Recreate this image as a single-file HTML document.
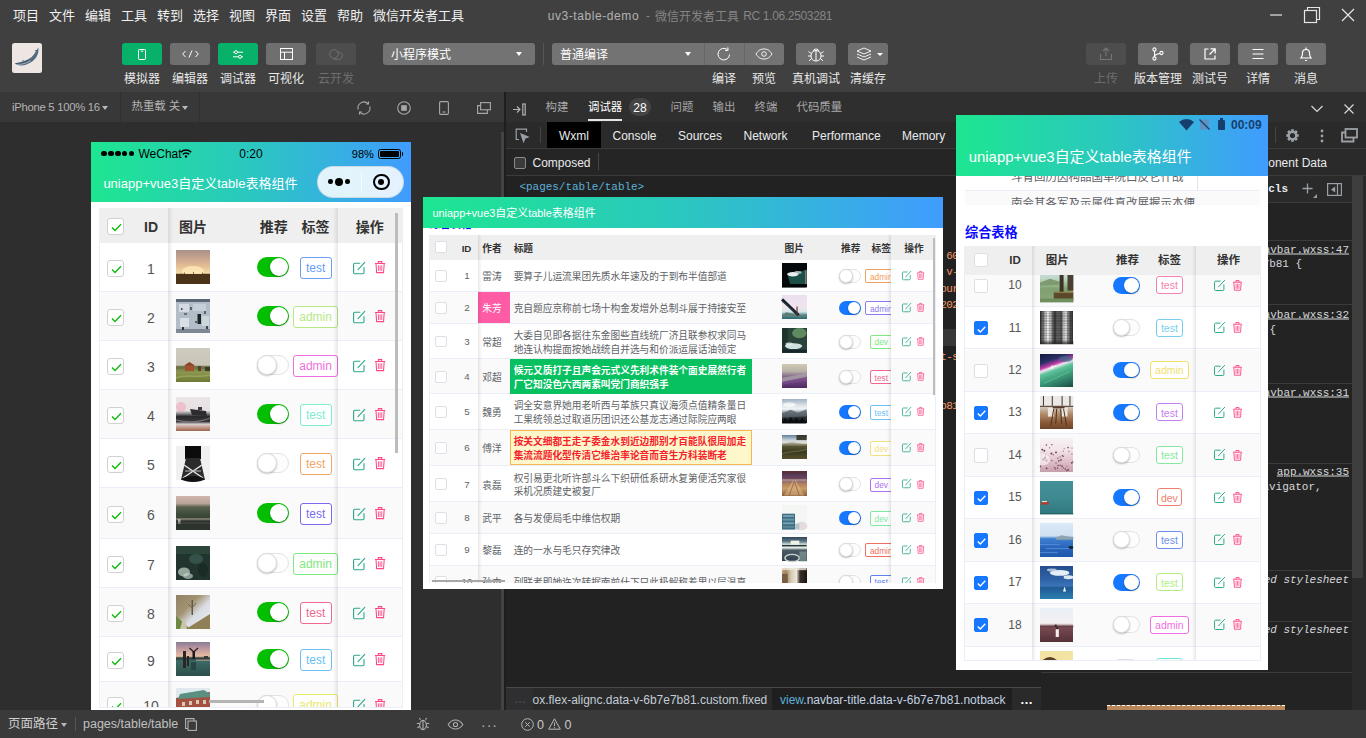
<!DOCTYPE html><html lang="zh-CN"><head><meta charset="utf-8"><title>uv3-table-demo - 微信开发者工具</title><style>
*{box-sizing:border-box;margin:0;padding:0}
html,body{width:1366px;height:738px;overflow:hidden;background:#2e2e2e}
body{position:relative;font-family:"Liberation Sans","Noto Sans CJK SC",sans-serif;font-size:12px;color:#e6e6e6}
div,svg,span.a{position:absolute}
.t{white-space:nowrap;transform:translateY(-50%);line-height:1}
.c{white-space:nowrap;transform:translate(-50%,-50%);line-height:1}
.r{white-space:nowrap;transform:translate(-100%,-50%);line-height:1}
.mono{font-family:"Liberation Mono","DejaVu Sans Mono",monospace;font-size:11px!important;letter-spacing:-0.04px}
.sim{overflow:hidden;background:#fff;color:#555}
.grad{background:linear-gradient(90deg,#1de690 0%,#2bc7c0 50%,#409cff 100%)}
.btn{background:#6f6f6f;border-radius:3px}
.btn.g{background:#07b16a}
.btn.d{background:#4d4d4d}
.lab{color:#e8e8e8;font-size:12px}
svg{overflow:visible}
</style></head><body><div style="left:0px;top:0px;width:1366px;height:92px;background:#404040"></div><div class="t" style="left:13px;top:14.7px;font-size:13px;color:#f0f0f0">项目</div><div class="t" style="left:49px;top:14.7px;font-size:13px;color:#f0f0f0">文件</div><div class="t" style="left:85px;top:14.7px;font-size:13px;color:#f0f0f0">编辑</div><div class="t" style="left:121px;top:14.7px;font-size:13px;color:#f0f0f0">工具</div><div class="t" style="left:157px;top:14.7px;font-size:13px;color:#f0f0f0">转到</div><div class="t" style="left:193px;top:14.7px;font-size:13px;color:#f0f0f0">选择</div><div class="t" style="left:229px;top:14.7px;font-size:13px;color:#f0f0f0">视图</div><div class="t" style="left:265px;top:14.7px;font-size:13px;color:#f0f0f0">界面</div><div class="t" style="left:301px;top:14.7px;font-size:13px;color:#f0f0f0">设置</div><div class="t" style="left:337px;top:14.7px;font-size:13px;color:#f0f0f0">帮助</div><div class="t" style="left:373px;top:14.7px;font-size:13px;color:#f0f0f0">微信开发者工具</div><div class="t" style="left:547.7px;top:16.2px;font-size:12px;color:#b2b2b2;letter-spacing:0.580px">uv3-table-demo</div><div class="t" style="left:646px;top:16.2px;font-size:12px;color:#858585">-</div><div class="t" style="left:655px;top:17px;font-size:12px;color:#858585">微信开发者工具</div><div class="t" style="left:743.2px;top:16.2px;font-size:12px;color:#858585;letter-spacing:-0.340px">RC 1.06.2503281</div><svg style="left:1266px;top:4px" width="96" height="22" viewBox="0 0 96 22" fill="none" stroke="#e6e6e6" stroke-width="1.2"><path d="M4 11h12"/><rect x="38.5" y="6.5" width="12" height="12"/><path d="M41.5 6.5v-3h12v12h-3"/><path d="M76 5l12 12M88 5l-12 12"/></svg><div style="left:12px;top:43px;width:30px;height:30px;background:#ede6e3;border-radius:2.500px;overflow:hidden"><svg style="left:0;top:0" width="30" height="30" viewBox="0 0 30 30"><g style="filter:blur(0.350px)"><path d="M3 20.300C6.500 19.600 10 18.600 13.500 17.400C18 15.800 22 12.800 23.900 8.300L22.600 6.900L24.900 7L26.300 4.400L26.500 7.300C26.300 9.500 25.800 11.500 24.600 13.800C22.800 17 19 19.800 14.500 21.500C10.500 22.900 5.500 23 3 20.300Z" fill="#526a7f"/><path d="M4.500 21C8.500 21.700 13.500 20.800 18.500 17.800" stroke="#b4c2cd" stroke-width="0.800" fill="none"/><path d="M3.500 20.600C8 20.600 12 19.500 16 17.600" stroke="#33485a" stroke-width="0.700" fill="none"/><path d="M10.300 18.300l0.500-1.400 1 1" stroke="#7d8f9e" stroke-width="0.800" fill="none"/></g></svg></div><div class="btn g" style="left:122px;top:43px;width:40px;height:22px;"><svg style="left:16px;top:5.500px" width="8" height="11" viewBox="0 0 8 11" fill="none" stroke="#fff" stroke-width="1"><rect x="0.500" y="0.500" width="7" height="10" rx="0.800"/><path d="M2.800 2.200h2.400"/></svg></div><div class="c lab" style="left:142px;top:78.700px;">模拟器</div><div class="btn " style="left:170px;top:43px;width:40px;height:22px;"><svg style="left:11.500px;top:6.500px" width="17" height="8" viewBox="0 0 17 8" fill="none" stroke="#fff" stroke-width="1"><path d="M3.500 1L0.700 4l2.800 3M13.500 1l2.800 3-2.800 3M10 0.500L7 7.500"/></svg></div><div class="c lab" style="left:190px;top:78.700px;">编辑器</div><div class="btn g" style="left:218px;top:43px;width:40px;height:22px;"><svg style="left:15px;top:6.500px" width="10" height="9" viewBox="0 0 10 9" fill="none" stroke="#fff" stroke-width="1"><path d="M0 2.200h1.400M4.600 2.200H10M0 6.800h5.400M8.600 6.800H10"/><circle cx="3" cy="2.200" r="1.500"/><circle cx="7" cy="6.800" r="1.500"/></svg></div><div class="c lab" style="left:238px;top:78.700px;">调试器</div><div class="btn " style="left:266px;top:43px;width:40px;height:22px;"><svg style="left:13.500px;top:5px" width="13" height="12" viewBox="0 0 13 12" fill="none" stroke="#fff" stroke-width="1"><rect x="0.500" y="0.500" width="12" height="11"/><path d="M0.500 4.200h12M4.500 4.200v7.300"/></svg></div><div class="c lab" style="left:286px;top:78.700px;">可视化</div><div class="btn d" style="left:316px;top:43px;width:40px;height:22px;"><svg style="left:13px;top:5.500px" width="15" height="11" viewBox="0 0 15 11" fill="none" stroke="#707070" stroke-width="1"><circle cx="5" cy="5" r="4.300"/><path d="M8.600 3.300a3.600 3.600 0 1 1 0.800 7H4.500"/></svg></div><div class="c lab" style="left:336px;top:78.700px;color:#6e6e6e">云开发</div><div style="left:383px;top:43px;width:152px;height:22px;background:#737373;border-radius:3px"><div class="t" style="left:8px;top:12.300px;color:#fff;font-size:12px">小程序模式</div><div style="left:133px;top:9px;border:3.5px solid transparent;border-top:4px solid #fff;width:0;height:0"></div></div><div style="left:543px;top:43px;width:1px;height:22px;background:#555"></div><div style="left:552px;top:43px;width:232px;height:22px;background:#737373;border-radius:3px"><div class="t" style="left:8px;top:12.300px;color:#fff;font-size:12px">普通编译</div><div style="left:133px;top:9px;border:3.5px solid transparent;border-top:4px solid #fff;width:0;height:0"></div><div style="left:152px;top:0;width:1px;height:22px;background:#666"></div><div style="left:192px;top:0;width:1px;height:22px;background:#666"></div><svg style="left:164.500px;top:4px" width="15" height="14" viewBox="0 0 15 14" fill="none" stroke="#fff" stroke-width="1"><path d="M12.600 7.500a5.800 5.800 0 1 1-2.300-5"/><path d="M10.800 0.300l0.300 3-3 0.200" /></svg><svg style="left:203px;top:5px" width="18" height="12" viewBox="0 0 18 12" fill="none" stroke="#fff" stroke-width="0.900"><path d="M1 6c2.5-4 5-5 8-5s5.500 1 8 5c-2.500 4-5 5-8 5s-5.500-1-8-5z"/><circle cx="9" cy="6" r="2.3"/></svg></div><div class="btn" style="left:796px;top:43px;width:40px;height:22px;"><svg style="left:11px;top:3.500px" width="18" height="15" viewBox="0 0 18 15" fill="none" stroke="#fff" stroke-width="1"><path d="M9 3.500c3.200 0 5 2.300 5 5.300s-1.800 5.200-5 5.200-5-2.200-5-5.200 1.800-5.300 5-5.300z"/><path d="M6.300 4a2.800 2.800 0 0 1 5.400 0M9 4v10M4.200 6.500L1.500 4.500M13.800 6.500l2.700-2M4 9H1M14 9h3M4.500 11.500L2 13.800M13.500 11.500l2.500 2.300"/></svg></div><div class="btn" style="left:848px;top:43px;width:40px;height:22px;"><svg style="left:7.500px;top:4px" width="16" height="14" viewBox="0 0 16 14" fill="none" stroke="#fff" stroke-width="0.900"><path d="M8 1l7 3-7 3-7-3z"/><path d="M1 7l7 3 7-3M1 10l7 3 7-3"/></svg><div style="left:28.500px;top:9.500px;border:3px solid transparent;border-top:3.500px solid #fff;width:0;height:0"></div></div><div class="c lab" style="left:724px;top:78.700px">编译</div><div class="c lab" style="left:764px;top:78.700px">预览</div><div class="c lab" style="left:816px;top:78.700px">真机调试</div><div class="c lab" style="left:868px;top:78.700px">清缓存</div><div class="btn d" style="left:1086px;top:43px;width:40px;height:22px;"><svg style="left:13px;top:4px" width="14" height="14" viewBox="0 0 14 14" fill="none" stroke="#757575" stroke-width="1.1"><path d="M7 9V1.500M4 4l3-3 3 3M1.500 7v5.500h11V7"/></svg></div><div class="c lab" style="left:1106px;top:78.700px;color:#6e6e6e">上传</div><div class="btn " style="left:1138px;top:43px;width:40px;height:22px;"><svg style="left:14px;top:4px" width="12" height="14" viewBox="0 0 12 14" fill="none" stroke="#fff" stroke-width="1.1"><circle cx="2.500" cy="2.500" r="1.600"/><circle cx="2.500" cy="11.500" r="1.600"/><circle cx="9.500" cy="6" r="1.600"/><path d="M2.500 4v6M2.500 10c0-3 3-3 5.500-3.500"/></svg></div><div class="c lab" style="left:1158px;top:78.700px;">版本管理</div><div class="btn " style="left:1190px;top:43px;width:40px;height:22px;"><svg style="left:14px;top:5px" width="12" height="12" viewBox="0 0 12 12" fill="none" stroke="#fff" stroke-width="1.2"><path d="M4.500 1H1v10h10V7.500M6.500 0.800h4.700v4.700M11 1L5.500 6.500"/></svg></div><div class="c lab" style="left:1210px;top:78.700px;">测试号</div><div class="btn " style="left:1238px;top:43px;width:40px;height:22px;"><svg style="left:14px;top:5px" width="12" height="12" viewBox="0 0 12 12" fill="none" stroke="#fff" stroke-width="1.2"><path d="M0.500 1.500h11M0.500 6h11M0.500 10.500h11"/></svg></div><div class="c lab" style="left:1258px;top:78.700px;">详情</div><div class="btn " style="left:1286px;top:43px;width:40px;height:22px;"><svg style="left:14px;top:3px" width="12" height="16" viewBox="0 0 12 16" fill="none" stroke="#fff" stroke-width="1.2"><path d="M1 12h10c-1-1-1.500-2-1.500-5a3.500 3.500 0 0 0-7 0c0 3-0.500 4-1.500 5z"/><path d="M6 1.500v2M5 14.500h2"/></svg></div><div class="c lab" style="left:1306px;top:78.700px;">消息</div><div style="left:0px;top:92px;width:504px;height:30px;background:#383838"></div><div class="t" style="left:12px;top:107.5px;color:#b4b4b4;font-size:11.300px;letter-spacing:-0.280px">iPhone 5 100% 16</div><div style="left:101.5px;top:106px;width:0px;height:0px;border:3px solid transparent;border-top:4px solid #b8b8b8"></div><div style="left:120px;top:92px;width:1px;height:30px;background:#303030"></div><div class="t" style="left:131.5px;top:107.3px;color:#b4b4b4;font-size:11.400px">热重载 关</div><div style="left:181.8px;top:106px;width:0px;height:0px;border:3px solid transparent;border-top:4px solid #b8b8b8"></div><div style="left:199px;top:92px;width:1px;height:30px;background:#303030"></div><svg style="left:357px;top:101px" width="14" height="14" viewBox="0 0 14 14" fill="none" stroke="#a8a8a8" stroke-width="1.1"><path d="M1.200 8.500A6 6 0 0 1 11 2.500M12.800 5.500A6 6 0 0 1 3 11.500"/><path d="M11.500 0.500v2.500h-2.500M2.500 13.500v-2.500h2.500"/></svg><svg style="left:397px;top:101px" width="14" height="14" viewBox="0 0 14 14" fill="none" stroke="#a8a8a8" stroke-width="1.1"><circle cx="7" cy="7" r="6.300"/><rect x="4.200" y="4.200" width="5.600" height="5.600" fill="#a8a8a8" stroke="none"/></svg><svg style="left:439px;top:101px" width="10" height="14" viewBox="0 0 10 14" fill="none" stroke="#a8a8a8" stroke-width="1.1"><rect x="0.600" y="0.600" width="8.800" height="12.800" rx="1.200"/><path d="M3.500 11h3"/></svg><svg style="left:477px;top:102px" width="14" height="12" viewBox="0 0 14 12" fill="none" stroke="#a8a8a8" stroke-width="1.100"><rect x="3.600" y="0.600" width="9.800" height="7.200"/><path d="M3.600 3.600H0.600v7.800h9.800V7.800"/></svg><div style="left:501px;top:132px;width:3px;height:578px;background:#444"></div><div style="left:504px;top:92px;width:2px;height:618px;background:#1e1e1e"></div><div style="left:506px;top:92px;width:860px;height:30px;background:#2f2f2f"></div><svg style="left:513px;top:103px" width="13" height="13" viewBox="0 0 13 13" fill="none" stroke="#b0b0b0" stroke-width="1.200"><path d="M0 6.500h6.500M4 3.500l3 3-3 3"/><rect x="9.800" y="1" width="2.400" height="11"/></svg><div class="t" style="left:545.5px;top:107.7px;font-size:11.400px;color:#a8a8a8">构建</div><div class="t" style="left:588px;top:107.7px;font-size:11.400px;color:#fff">调试器</div><div class="t" style="left:670.5px;top:107.7px;font-size:11.400px;color:#a8a8a8">问题</div><div class="t" style="left:712.5px;top:107.7px;font-size:11.400px;color:#a8a8a8">输出</div><div class="t" style="left:754.5px;top:107.7px;font-size:11.400px;color:#a8a8a8">终端</div><div class="t" style="left:796.5px;top:107.7px;font-size:11.400px;color:#a8a8a8">代码质量</div><div style="left:588px;top:119px;width:33.5px;height:2px;background:rgba(255,255,255,.88)"></div><div style="left:629px;top:98px;width:22px;height:18px;background:#444;border-radius:9px"><div class="c" style="left:11px;top:9.500px;color:#fff;font-size:12px">28</div></div><svg style="left:1311px;top:105px" width="12" height="8" viewBox="0 0 12 8" fill="none" stroke="#d8d8d8" stroke-width="1.200"><path d="M0.500 1l5.500 5.500L11.500 1"/></svg><svg style="left:1344px;top:104px" width="10" height="10" viewBox="0 0 10 10" fill="none" stroke="#d8d8d8" stroke-width="1.200"><path d="M0.500 0.500l9 9M9.500 0.500l-9 9"/></svg><div style="left:506px;top:122px;width:860px;height:26.5px;background:#2a2a2a;border-bottom:1px solid #3b3b3b"></div><svg style="left:515px;top:128px" width="15" height="15" viewBox="0 0 15 15" fill="none" stroke="#9aa0a6" stroke-width="1.200"><path d="M11.500 4V1.200H1.200v10.300H4"/><path d="M6 6l2.600 7.500 1.300-3.200 3.200-1.300z" fill="#9aa0a6"/></svg><div style="left:540px;top:127px;width:1px;height:16px;background:#464646"></div><div style="left:547px;top:122px;width:54px;height:26px;background:#000"></div><div class="t" style="left:559px;top:136px;font-size:12px;color:#e8eaed">Wxml</div><div class="t" style="left:612.5px;top:136px;font-size:12px;color:#e8eaed">Console</div><div class="t" style="left:678px;top:136px;font-size:12px;color:#e8eaed">Sources</div><div class="t" style="left:743.5px;top:136px;font-size:12px;color:#e8eaed">Network</div><div class="t" style="left:812px;top:136px;font-size:12px;color:#e8eaed">Performance</div><div class="t" style="left:902px;top:136px;font-size:12px;color:#e8eaed">Memory</div><div style="left:1274.5px;top:127px;width:1px;height:16px;background:#464646"></div><svg style="left:1286.300px;top:128.700px" width="13" height="13" viewBox="-7.500 -7.500 15 15"><g fill="#9aa0a6"><rect x="-1.600" y="-7.200" width="3.200" height="4" transform="rotate(0)"/><rect x="-1.600" y="-7.200" width="3.200" height="4" transform="rotate(45)"/><rect x="-1.600" y="-7.200" width="3.200" height="4" transform="rotate(90)"/><rect x="-1.600" y="-7.200" width="3.200" height="4" transform="rotate(135)"/><rect x="-1.600" y="-7.200" width="3.200" height="4" transform="rotate(180)"/><rect x="-1.600" y="-7.200" width="3.200" height="4" transform="rotate(225)"/><rect x="-1.600" y="-7.200" width="3.200" height="4" transform="rotate(270)"/><rect x="-1.600" y="-7.200" width="3.200" height="4" transform="rotate(315)"/></g><circle r="4.300" fill="none" stroke="#9aa0a6" stroke-width="2.600"/></svg><svg style="left:1319.500px;top:128.500px" width="4" height="14" viewBox="0 0 4 14" fill="#9aa0a6"><circle cx="2" cy="2" r="1.400"/><circle cx="2" cy="7" r="1.400"/><circle cx="2" cy="12" r="1.400"/></svg><svg style="left:1341px;top:128px" width="17" height="15" viewBox="0 0 17 15" fill="none" stroke="#9aa0a6" stroke-width="1.800"><rect x="4.500" y="1" width="11.500" height="8.500"/><path d="M4.500 4.500H1V13.500h11.500v-4"/></svg><div style="left:506px;top:148.5px;width:535px;height:27px;background:#252525;border-bottom:1px solid #3b3b3b"></div><div style="left:514px;top:156.5px;width:12px;height:12px;border:1px solid #8a8a8a;border-radius:2px;background:#3b3b3b"></div><div class="t" style="left:532.5px;top:162.5px;font-size:12px;color:#e8eaed">Composed</div><div style="left:598px;top:153px;width:1px;height:17px;background:#464646"></div><div style="left:506px;top:175.5px;width:535px;height:511.5px;background:#222222"></div><div class="t mono" style="left:519.5px;top:187px;font-size:12px;color:#5db0d7">&lt;pages/table/table&gt;</div><div style="left:506px;top:329px;width:535px;height:16.5px;background:#383838"></div><div class="t mono" style="left:940.3px;top:255.6px;font-size:12px;color:#f29766;letter-spacing:-0.600px">&nbsp;60</div><div class="t mono" style="left:940.3px;top:272px;font-size:12px;color:#f29766;letter-spacing:-0.600px">&nbsp;v-</div><div class="t mono" style="left:940.3px;top:288.5px;font-size:12px;color:#f29766;letter-spacing:-0.600px">our</div><div class="t mono" style="left:940.3px;top:304.5px;font-size:12px;color:#f29766;letter-spacing:-0.600px">202</div><div class="t mono" style="left:940.3px;top:356.5px;font-size:12px;color:#f29766;letter-spacing:-0.600px">t-s</div><div class="t mono" style="left:940.3px;top:405.5px;font-size:12px;color:#f29766;letter-spacing:-0.600px">b81</div><div style="left:506px;top:687px;width:535px;height:23px;background:#2a2a2a;border-top:1px solid #494949"></div><div style="left:506px;top:688px;width:27px;height:22px;background:#2f2f31"></div><div class="t" style="left:514px;top:699px;color:#5a5b5e;font-size:12px">…</div><div class="t" style="left:532.5px;top:700px;font-size:12px;color:#c3ccd6">ox.flex-alignc.data-v-6b7e7b81.custom.fixed</div><div style="left:772px;top:688px;width:240px;height:22px;background:#1f1f1f"></div><div class="t" style="left:780px;top:700px;font-size:12px;color:#c3d2e2"><span style="color:#5db0d7">view</span>.navbar-title.data-v-6b7e7b81.notback</div><div class="t" style="left:1020px;top:699px;color:#fff;font-size:13px;font-weight:bold">…</div><div style="left:1041px;top:148.5px;width:325px;height:27px;background:#2a2a2a;border-bottom:1px solid #3b3b3b"></div><div style="left:1040.5px;top:148.5px;width:1px;height:561.5px;background:#3b3b3b"></div><div class="r" style="left:1327px;top:163px;font-size:12px;color:#e8eaed">Component Data</div><div style="left:1041px;top:175.5px;width:310.5px;height:27px;background:#2a2a2a;border-bottom:1px solid #3b3b3b"></div><div class="r mono" style="left:1288px;top:189px;font-size:12px;color:#e8eaed;font-weight:bold">cls</div><svg style="left:1301.500px;top:183px" width="16" height="16" viewBox="0 0 16 16" fill="none" stroke="#9aa0a6" stroke-width="1.300"><path d="M5.500 0.500v10M0.500 5.500h10"/><path d="M15 11v4h-4z" fill="#9aa0a6" stroke="none"/></svg><svg style="left:1327px;top:183px" width="15" height="13" viewBox="0 0 15 13" fill="none" stroke="#9aa0a6" stroke-width="1.200"><rect x="0.600" y="0.600" width="13.800" height="11.800"/><path d="M10.500 0.600v11.800"/><path d="M8.200 3.500v6l-4.200-3z" fill="#9aa0a6" stroke="none"/></svg><div style="left:1041px;top:202.5px;width:310.5px;height:507.5px;background:#232323"></div><div style="left:1041px;top:239.5px;width:310.5px;height:1px;background:#3b3b3b"></div><div style="left:1041px;top:304px;width:310.5px;height:1px;background:#3b3b3b"></div><div style="left:1041px;top:382.5px;width:310.5px;height:1px;background:#3b3b3b"></div><div style="left:1041px;top:463px;width:310.5px;height:1px;background:#3b3b3b"></div><div style="left:1041px;top:569.5px;width:310.5px;height:1px;background:#3b3b3b"></div><div style="left:1041px;top:621px;width:310.5px;height:1px;background:#3b3b3b"></div><div style="left:1041px;top:671.5px;width:310.5px;height:1px;background:#3b3b3b"></div><div class="r mono" style="left:1349px;top:249.5px;font-size:12px;color:#d5d7da;text-decoration:underline">navbar.wxss:47</div><div class="t mono" style="left:1262.7px;top:264px;font-size:12px;color:#d5d7da">7b81 {</div><div class="r mono" style="left:1349px;top:314.5px;font-size:12px;color:#d5d7da;text-decoration:underline">navbar.wxss:32</div><div class="t mono" style="left:1269.5px;top:329.5px;font-size:12px;color:#d5d7da">{</div><div class="r mono" style="left:1349px;top:393px;font-size:12px;color:#d5d7da;text-decoration:underline">navbar.wxss:31</div><div class="r mono" style="left:1349px;top:471.5px;font-size:12px;color:#d5d7da;text-decoration:underline">app.wxss:35</div><div class="t mono" style="left:1255.9px;top:486.5px;font-size:12px;color:#d5d7da">navigator,</div><div class="r mono" style="left:1349px;top:579.5px;font-size:12px;color:#d5d7da;font-style:italic">injected stylesheet</div><div class="r mono" style="left:1349px;top:630px;font-size:12px;color:#d5d7da;font-style:italic">injected stylesheet</div><div style="left:1107px;top:705px;width:178px;height:5px;background:#b8875a;border-top:1px dashed #fff"></div><div style="left:1351.5px;top:175.5px;width:14.5px;height:534.5px;background:#2a2a2a"></div><div style="left:1351.5px;top:176px;width:11.5px;height:402px;background:#3e3e3e"></div><div style="left:0px;top:710px;width:1366px;height:28px;background:#3a3a3a"></div><div class="t" style="left:8px;top:724px;font-size:12.500px;color:#d0d0d0">页面路径</div><div style="left:61px;top:722.5px;width:0px;height:0px;border:3px solid transparent;border-top:4px solid #b8b8b8"></div><div style="left:75px;top:717px;width:1px;height:14px;background:#555"></div><div class="t" style="left:83px;top:724px;font-size:12.500px;color:#c0c0c0">pages/table/table</div><svg style="left:185px;top:718px" width="12" height="13" viewBox="0 0 12 13" fill="none" stroke="#b0b0b0" stroke-width="1.100"><rect x="3" y="3" width="8.400" height="9.400"/><path d="M3 10.500H0.600V0.600H9V3"/></svg><svg style="left:414px;top:716px" width="18" height="16" viewBox="0 0 16 16" fill="none" stroke="#b0b0b0" stroke-width="1.100"><ellipse cx="8" cy="9" rx="3.300" ry="4.600"/><path d="M8 4.500v9M5.500 3.800L4.300 2M10.500 3.800L11.700 2M4.700 7.500H1.800M14.200 7.500h-2.900M4.700 10.500l-2.400 1.200M11.300 10.500l2.400 1.200"/></svg><svg style="left:447px;top:718.500px" width="17" height="11" viewBox="0 0 18 12" fill="none" stroke="#b0b0b0" stroke-width="1.100"><path d="M1 6c2.500-4 5-5 8-5s5.500 1 8 5c-2.500 4-5 5-8 5s-5.500-1-8-5z"/><circle cx="9" cy="6" r="2.300"/></svg><div class="t" style="left:481px;top:724.5px;font-size:14px;color:#b0b0b0;letter-spacing:1px">···</div><svg style="left:521px;top:718px" width="13" height="13" viewBox="0 0 13 13" fill="none" stroke="#b8b8b8" stroke-width="1"><circle cx="6.500" cy="6.500" r="5.800"/><path d="M4.300 4.300l4.400 4.400M8.700 4.300l-4.400 4.400"/></svg><div class="t" style="left:537px;top:724.5px;font-size:12.500px;color:#c8c8c8">0</div><svg style="left:548px;top:718px" width="13" height="12" viewBox="0 0 13 12" fill="none" stroke="#b8b8b8" stroke-width="1"><path d="M6.500 0.800L12.300 11.200H0.700z"/><path d="M6.500 4.500v3.500M6.500 9.200v1"/></svg><div class="t" style="left:564.5px;top:724.5px;font-size:12.500px;color:#c8c8c8">0</div><div class="sim" style="left:91px;top:142px;width:320px;height:568px;"><div class="grad" style="left:0px;top:0px;width:320px;height:60px;"></div><div style="left:10.2px;top:8.6px;width:5.6px;height:5.6px;background:#000;border-radius:50%"></div><div style="left:17.1px;top:8.6px;width:5.6px;height:5.6px;background:#000;border-radius:50%"></div><div style="left:24px;top:8.6px;width:5.6px;height:5.6px;background:#000;border-radius:50%"></div><div style="left:30.9px;top:8.6px;width:5.6px;height:5.6px;background:#000;border-radius:50%"></div><div style="left:37.8px;top:8.6px;width:5.6px;height:5.6px;background:#000;border-radius:50%"></div><div class="t" style="left:47.5px;top:11.5px;color:#000;font-size:12px">WeChat</div><svg style="left:89px;top:6.500px" width="12" height="9" viewBox="0 0 12 9" fill="none" stroke="#000" stroke-width="1.500"><path d="M0.800 3.200a7.500 7.500 0 0 1 10.400 0M2.800 5.400a4.600 4.600 0 0 1 6.400 0"/><circle cx="6" cy="7.500" r="1.200" fill="#000" stroke="none"/></svg><div class="c" style="left:160px;top:11.5px;color:#000;font-size:12px">0:20</div><div class="t" style="left:260.8px;top:12px;color:#000;font-size:11px">98%</div><div style="left:287px;top:7.4px;width:23px;height:9.4px;border:1px solid #000;border-radius:2.500px"><div style="left:0.8px;top:0.8px;width:19.4px;height:5.8px;background:#000;border-radius:1px"></div></div><div style="left:310.6px;top:10.4px;width:1.4px;height:3.4px;background:#000;border-radius:0 1px 1px 0"></div><div class="t" style="left:12.4px;top:41.2px;color:#fff;font-size:13px">uniapp+vue3自定义table表格组件</div><div style="left:226px;top:23.8px;width:87px;height:32px;background:rgba(255,255,255,.86);border:1px solid rgba(200,215,225,.9);border-radius:16px"><div style="left:10.3px;top:12.7px;width:4.6px;height:4.6px;background:#000;border-radius:50%"></div><div style="left:16.8px;top:11px;width:8px;height:8px;background:#000;border-radius:50%"></div><div style="left:27.2px;top:12.7px;width:4.6px;height:4.6px;background:#000;border-radius:50%"></div><div style="left:42.5px;top:6px;width:1px;height:18px;background:rgba(255,255,255,.7)"></div><div style="left:55.2px;top:6.8px;width:16.4px;height:16.4px;border:2px solid #000;border-radius:50%"><div style="left:3.2px;top:3.2px;width:6px;height:6px;background:#000;border-radius:50%"></div></div></div><div style="left:8px;top:66px;width:304px;height:499.5px;overflow:hidden"><div style="left:0px;top:0px;width:304px;height:35px;background:#efefef"></div><div class="c" style="left:52px;top:18.5px;font-weight:bold;font-size:14px;color:#333">ID</div><div class="t" style="left:80px;top:18.5px;font-weight:bold;font-size:14px;color:#333">图片</div><div class="c" style="left:174.7px;top:18.5px;font-weight:bold;font-size:14px;color:#333">推荐</div><div class="c" style="left:216.6px;top:18.5px;font-weight:bold;font-size:14px;color:#333">标签</div><div class="c" style="left:270.7px;top:18.5px;font-weight:bold;font-size:14px;color:#333">操作</div><div style="left:8px;top:9.5px;width:17px;height:17px;background:#fff;border:1px solid #d1d1d1;border-radius:3px"><svg style="left:3px;top:4px" width="11" height="9" viewBox="0 0 11 9" fill="none" stroke="#09bb07" stroke-width="1.300"><path d="M1 4.500l3 3 6-6.300"/></svg></div><div style="left:0px;top:35px;width:304px;height:49px;background:#fff;border-bottom:1px solid #ebedf7"></div><div style="left:8px;top:51.5px;width:17px;height:17px;background:#fff;border:1px solid #d1d1d1;border-radius:3px"><svg style="left:3px;top:4px" width="11" height="9" viewBox="0 0 11 9" fill="none" stroke="#09bb07" stroke-width="1.300"><path d="M1 4.500l3 3 6-6.300"/></svg></div><div class="c" style="left:52px;top:60.5px;font-size:14px;color:#555">1</div><svg style="left:77px;top:42px;background:linear-gradient(#a99088 0%,#caa58e 25%,#ecc798 55%,#f6dca6 68%,#58401f 72%,#402c12 100%)" width="34" height="34" viewBox="0 0 34 34" preserveAspectRatio="none"><g style="filter:blur(0.7px)"><ellipse cx="17" cy="21" rx="11" ry="5" fill="#ffe9b8" opacity="0.8"/><rect x="0" y="24" width="34" height="10" fill="#4a3318"/><rect x="8" y="22.5" width="0.6" height="2" fill="#3a2a14"/><rect x="17" y="22" width="0.6" height="2.5" fill="#3a2a14"/><rect x="26" y="22.5" width="0.6" height="2" fill="#3a2a14"/></g></svg><div style="left:158px;top:49px;width:32px;height:20px;background:#04be02;border-radius:10px"><div style="left:13px;top:1px;width:18px;height:18px;background:#fff;border-radius:50%;box-shadow:0 1px 2px rgba(0,0,0,.3)"></div></div><div style="left:200.6px;top:48.7px;width:32px;height:22px;border:1px solid #6a9df5;border-radius:3px;background:#fff"><div class="c" style="left:15px;top:10.3px;color:#6a9df5;font-size:12px">test</div></div><div style="left:0px;top:84px;width:304px;height:49px;background:#fafafa;border-bottom:1px solid #ebedf7"></div><div style="left:8px;top:100.5px;width:17px;height:17px;background:#fff;border:1px solid #d1d1d1;border-radius:3px"><svg style="left:3px;top:4px" width="11" height="9" viewBox="0 0 11 9" fill="none" stroke="#09bb07" stroke-width="1.300"><path d="M1 4.500l3 3 6-6.300"/></svg></div><div class="c" style="left:52px;top:109.5px;font-size:14px;color:#555">2</div><svg style="left:77px;top:91px;background:#b3bdc8" width="34" height="34" viewBox="0 0 34 34" preserveAspectRatio="none"><g style="filter:blur(0.7px)"><rect x="0" y="0" width="34" height="3" fill="#5a6674"/><rect x="3" y="5" width="10" height="8" fill="#d3dae2"/><rect x="17" y="5" width="13" height="7" fill="#c6cfd8"/><rect x="4" y="19" width="9" height="9" fill="#d8dfe6"/><rect x="26" y="17" width="7" height="10" fill="#cdd5dd"/><rect x="14" y="8" width="2" height="3" fill="#56606a"/><rect x="8" y="14" width="3" height="2" fill="#66707c"/><rect x="28" y="12" width="2" height="3" fill="#5a646e"/><rect x="5" y="9" width="1.5" height="2" fill="#4a545e"/><rect x="19" y="22" width="2" height="2" fill="#5a646e"/><rect x="21.5" y="15" width="3.5" height="10" fill="#1f2226"/><rect x="0" y="30" width="34" height="4" fill="#7d8894"/><rect x="6" y="28" width="2" height="3" fill="#2c3238"/><rect x="30" y="27" width="2" height="3" fill="#3c444c"/></g></svg><div style="left:158px;top:98px;width:32px;height:20px;background:#04be02;border-radius:10px"><div style="left:13px;top:1px;width:18px;height:18px;background:#fff;border-radius:50%;box-shadow:0 1px 2px rgba(0,0,0,.3)"></div></div><div style="left:194.1px;top:97.7px;width:45px;height:22px;border:1px solid #b6e886;border-radius:3px;background:#fff"><div class="c" style="left:21.5px;top:10.3px;color:#b6e886;font-size:12px">admin</div></div><div style="left:0px;top:133px;width:304px;height:49px;background:#fff;border-bottom:1px solid #ebedf7"></div><div style="left:8px;top:149.5px;width:17px;height:17px;background:#fff;border:1px solid #d1d1d1;border-radius:3px"><svg style="left:3px;top:4px" width="11" height="9" viewBox="0 0 11 9" fill="none" stroke="#09bb07" stroke-width="1.300"><path d="M1 4.500l3 3 6-6.300"/></svg></div><div class="c" style="left:52px;top:158.5px;font-size:14px;color:#555">3</div><svg style="left:77px;top:140px;background:linear-gradient(#cfcabf 0%,#cac5b8 50%,#707a42 56%,#8b9550 72%,#6c7a34 100%)" width="34" height="34" viewBox="0 0 34 34" preserveAspectRatio="none"><g style="filter:blur(0.7px)"><rect x="0" y="18" width="34" height="3" fill="#6a6f44" opacity="0.7"/><rect x="9" y="17" width="9" height="6" fill="#a4512e"/><polygon points="8,17.500 13.500,14 19,17.500" fill="#8a4428"/><rect x="22" y="18" width="3" height="5" fill="#5a3f2a"/><rect x="29" y="19" width="5" height="4" fill="#3c3a28"/><path d="M0 30C10 26 20 30 34 27" stroke="#a6ad62" stroke-width="1.5" fill="none" opacity="0.7"/></g></svg><div style="left:158px;top:147px;width:32px;height:20px;background:#fdfdfd;border:1px solid #e3e3e3;border-radius:10px"><div style="left:-1px;top:-1px;width:20px;height:20px;background:#fff;border-radius:50%;border:1px solid #dcdcdc;box-shadow:0 1px 2px rgba(0,0,0,.25)"></div></div><div style="left:194.1px;top:146.7px;width:45px;height:22px;border:1px solid #f06fe0;border-radius:3px;background:#fff"><div class="c" style="left:21.5px;top:10.3px;color:#f06fe0;font-size:12px">admin</div></div><div style="left:0px;top:182px;width:304px;height:49px;background:#fafafa;border-bottom:1px solid #ebedf7"></div><div style="left:8px;top:198.5px;width:17px;height:17px;background:#fff;border:1px solid #d1d1d1;border-radius:3px"><svg style="left:3px;top:4px" width="11" height="9" viewBox="0 0 11 9" fill="none" stroke="#09bb07" stroke-width="1.300"><path d="M1 4.500l3 3 6-6.300"/></svg></div><div class="c" style="left:52px;top:207.5px;font-size:14px;color:#555">4</div><svg style="left:77px;top:189px;background:linear-gradient(#ebe5e6 0%,#e6e0e2 40%,#8a8688 49%,#2a2a2d 57%,#39373a 72%,#d8d2d2 80%,#c9a090 88%,#9c6650 100%)" width="34" height="34" viewBox="0 0 34 34" preserveAspectRatio="none"><g style="filter:blur(0.7px)"><ellipse cx="5" cy="10" rx="5" ry="5" fill="#f2a8bd" opacity="0.6"/><polygon points="14,12 30,14 31,19 16,18" fill="#2c2c2e"/><rect x="22" y="10" width="4" height="3" fill="#3a3a3c"/><path d="M0 23C12 26 24 25 34 21" stroke="#77757a" stroke-width="1.2" fill="none"/></g></svg><div style="left:158px;top:196px;width:32px;height:20px;background:#04be02;border-radius:10px"><div style="left:13px;top:1px;width:18px;height:18px;background:#fff;border-radius:50%;box-shadow:0 1px 2px rgba(0,0,0,.3)"></div></div><div style="left:200.6px;top:195.7px;width:32px;height:22px;border:1px solid #7deccf;border-radius:3px;background:#fff"><div class="c" style="left:15px;top:10.3px;color:#7deccf;font-size:12px">test</div></div><div style="left:0px;top:231px;width:304px;height:49px;background:#fff;border-bottom:1px solid #ebedf7"></div><div style="left:8px;top:247.5px;width:17px;height:17px;background:#fff;border:1px solid #d1d1d1;border-radius:3px"><svg style="left:3px;top:4px" width="11" height="9" viewBox="0 0 11 9" fill="none" stroke="#09bb07" stroke-width="1.300"><path d="M1 4.500l3 3 6-6.300"/></svg></div><div class="c" style="left:52px;top:256.5px;font-size:14px;color:#555">5</div><svg style="left:77px;top:238px;background:#f0f0f0" width="34" height="34" viewBox="0 0 34 34" preserveAspectRatio="none"><g style="filter:blur(0.7px)"><rect x="9" y="0" width="16" height="13" fill="#0c0c0c"/><polygon points="5,34 10,12 24,12 29,34" fill="#2b2b2b"/><path d="M8 19L27 32M26 19L7 32" stroke="#e6e6e6" stroke-width="1.5" fill="none"/><path d="M9 25L25 25" stroke="#bbb" stroke-width="1" fill="none"/><ellipse cx="17" cy="33" rx="11" ry="3" fill="#111"/></g></svg><div style="left:158px;top:245px;width:32px;height:20px;background:#fdfdfd;border:1px solid #e3e3e3;border-radius:10px"><div style="left:-1px;top:-1px;width:20px;height:20px;background:#fff;border-radius:50%;border:1px solid #dcdcdc;box-shadow:0 1px 2px rgba(0,0,0,.25)"></div></div><div style="left:200.6px;top:244.7px;width:32px;height:22px;border:1px solid #f0a667;border-radius:3px;background:#fff"><div class="c" style="left:15px;top:10.3px;color:#f0a667;font-size:12px">test</div></div><div style="left:0px;top:280px;width:304px;height:51px;background:#fafafa;border-bottom:1px solid #ebedf7"></div><div style="left:8px;top:297.5px;width:17px;height:17px;background:#fff;border:1px solid #d1d1d1;border-radius:3px"><svg style="left:3px;top:4px" width="11" height="9" viewBox="0 0 11 9" fill="none" stroke="#09bb07" stroke-width="1.300"><path d="M1 4.500l3 3 6-6.300"/></svg></div><div class="c" style="left:52px;top:306.5px;font-size:14px;color:#555">6</div><svg style="left:77px;top:288px;background:linear-gradient(#cfb6ae 0%,#b9a59a 22%,#5a6250 32%,#3c4a39 55%,#2f3a30 100%)" width="34" height="34" viewBox="0 0 34 34" preserveAspectRatio="none"><g style="filter:blur(0.7px)"><rect x="0" y="22" width="34" height="2.5" fill="#75736a"/><rect x="0" y="24.5" width="34" height="9.5" fill="#2b332c"/><rect x="2" y="23" width="2.5" height="5" fill="#c9c2b8" opacity="0.8"/><path d="M0 27H34" stroke="#4c4f48" stroke-width="1" fill="none"/></g></svg><div style="left:158px;top:295px;width:32px;height:20px;background:#04be02;border-radius:10px"><div style="left:13px;top:1px;width:18px;height:18px;background:#fff;border-radius:50%;box-shadow:0 1px 2px rgba(0,0,0,.3)"></div></div><div style="left:200.6px;top:294.7px;width:32px;height:22px;border:1px solid #7a6bef;border-radius:3px;background:#fff"><div class="c" style="left:15px;top:10.3px;color:#7a6bef;font-size:12px">test</div></div><div style="left:0px;top:331px;width:304px;height:49px;background:#fff;border-bottom:1px solid #ebedf7"></div><div style="left:8px;top:347.5px;width:17px;height:17px;background:#fff;border:1px solid #d1d1d1;border-radius:3px"><svg style="left:3px;top:4px" width="11" height="9" viewBox="0 0 11 9" fill="none" stroke="#09bb07" stroke-width="1.300"><path d="M1 4.500l3 3 6-6.300"/></svg></div><div class="c" style="left:52px;top:356.5px;font-size:14px;color:#555">7</div><svg style="left:77px;top:338px;background:#21352e" width="34" height="34" viewBox="0 0 34 34" preserveAspectRatio="none"><g style="filter:blur(0.7px)"><rect x="0" y="0" width="34" height="8" fill="#2c463c"/><ellipse cx="20" cy="13" rx="7" ry="5" fill="#35524a"/><ellipse cx="8" cy="26" rx="6" ry="4.5" fill="#aab8ae" opacity="0.85"/><ellipse cx="12" cy="30" rx="5" ry="3" fill="#d4dcd6" opacity="0.6"/><ellipse cx="27" cy="24" rx="5" ry="7" fill="#1a2a25"/></g></svg><div style="left:158px;top:345px;width:32px;height:20px;background:#fdfdfd;border:1px solid #e3e3e3;border-radius:10px"><div style="left:-1px;top:-1px;width:20px;height:20px;background:#fff;border-radius:50%;border:1px solid #dcdcdc;box-shadow:0 1px 2px rgba(0,0,0,.25)"></div></div><div style="left:194.1px;top:344.7px;width:45px;height:22px;border:1px solid #7fe77f;border-radius:3px;background:#fff"><div class="c" style="left:21.5px;top:10.3px;color:#7fe77f;font-size:12px">admin</div></div><div style="left:0px;top:380px;width:304px;height:49px;background:#fafafa;border-bottom:1px solid #ebedf7"></div><div style="left:8px;top:396.5px;width:17px;height:17px;background:#fff;border:1px solid #d1d1d1;border-radius:3px"><svg style="left:3px;top:4px" width="11" height="9" viewBox="0 0 11 9" fill="none" stroke="#09bb07" stroke-width="1.300"><path d="M1 4.500l3 3 6-6.300"/></svg></div><div class="c" style="left:52px;top:405.5px;font-size:14px;color:#555">8</div><svg style="left:77px;top:387px;background:linear-gradient(135deg,#8f8264 0%,#a39372 35%,#d9dce2 58%,#eef0f4 100%)" width="34" height="34" viewBox="0 0 34 34" preserveAspectRatio="none"><g style="filter:blur(0.7px)"><polygon points="10,34 34,19 34,34" fill="#8f8058"/><polygon points="0,21 14,34 0,34" fill="#6c8842"/><polygon points="4,34 7,24 9,24 11,34" fill="#cbc4aa"/><rect x="15.5" y="5" width="1.5" height="15" fill="#5f5a48"/><path d="M12 9L16 13L20 8" stroke="#6a6452" stroke-width="1" fill="none"/></g></svg><div style="left:158px;top:394px;width:32px;height:20px;background:#04be02;border-radius:10px"><div style="left:13px;top:1px;width:18px;height:18px;background:#fff;border-radius:50%;box-shadow:0 1px 2px rgba(0,0,0,.3)"></div></div><div style="left:200.6px;top:393.7px;width:32px;height:22px;border:1px solid #f06790;border-radius:3px;background:#fff"><div class="c" style="left:15px;top:10.3px;color:#f06790;font-size:12px">test</div></div><div style="left:0px;top:429px;width:304px;height:45px;background:#fff;border-bottom:1px solid #ebedf7"></div><div style="left:8px;top:443.5px;width:17px;height:17px;background:#fff;border:1px solid #d1d1d1;border-radius:3px"><svg style="left:3px;top:4px" width="11" height="9" viewBox="0 0 11 9" fill="none" stroke="#09bb07" stroke-width="1.300"><path d="M1 4.500l3 3 6-6.300"/></svg></div><div class="c" style="left:52px;top:452.5px;font-size:14px;color:#555">9</div><svg style="left:77px;top:434px;background:linear-gradient(#8a7c98 0%,#c9a1a0 25%,#e7bda4 42%,#2c3838 47%,#3b6a66 56%,#2c4f4a 100%)" width="34" height="34" viewBox="0 0 34 34" preserveAspectRatio="none"><g style="filter:blur(0.7px)"><rect x="7" y="9" width="3" height="17" fill="#2b2425"/><rect x="11" y="14" width="2" height="10" fill="#2b2425"/><rect x="16.5" y="9" width="2.5" height="8" fill="#1e1a1c"/><path d="M13.500 6L17.700 10L22 6" stroke="#1e1a1c" stroke-width="1.2" fill="none"/><rect x="20" y="17.5" width="14" height="1.5" fill="#d9a89a" opacity="0.6"/><rect x="15" y="20" width="5" height="8" fill="#24403c" opacity="0.8"/><rect x="28" y="14" width="4" height="3" fill="#3a3a34"/></g></svg><div style="left:158px;top:441px;width:32px;height:20px;background:#04be02;border-radius:10px"><div style="left:13px;top:1px;width:18px;height:18px;background:#fff;border-radius:50%;box-shadow:0 1px 2px rgba(0,0,0,.3)"></div></div><div style="left:200.6px;top:440.7px;width:32px;height:22px;border:1px solid #69bff0;border-radius:3px;background:#fff"><div class="c" style="left:15px;top:10.3px;color:#69bff0;font-size:12px">test</div></div><div style="left:0px;top:474px;width:304px;height:46px;background:#fafafa;border-bottom:1px solid #ebedf7"></div><div style="left:8px;top:489px;width:17px;height:17px;background:#fff;border:1px solid #d1d1d1;border-radius:3px"><svg style="left:3px;top:4px" width="11" height="9" viewBox="0 0 11 9" fill="none" stroke="#09bb07" stroke-width="1.300"><path d="M1 4.500l3 3 6-6.300"/></svg></div><div class="c" style="left:52px;top:498px;font-size:14px;color:#555">10</div><svg style="left:77px;top:479.5px;background:#a55140" width="34" height="34" viewBox="0 0 34 34" preserveAspectRatio="none"><g style="filter:blur(0.7px)"><polygon points="0,0 34,0 34,4 0,10" fill="#dfe9ee"/><polygon points="4,6 28,2 34,6 34,9 2,11" fill="#5a8f82"/><rect x="6" y="14" width="3" height="4" fill="#d8c8b8"/><rect x="13" y="13" width="3" height="4" fill="#d8c8b8"/><rect x="20" y="12" width="3" height="4" fill="#d8c8b8"/><rect x="27" y="12" width="3" height="4" fill="#d8c8b8"/></g></svg><div style="left:158px;top:486.5px;width:32px;height:20px;background:#fdfdfd;border:1px solid #e3e3e3;border-radius:10px"><div style="left:-1px;top:-1px;width:20px;height:20px;background:#fff;border-radius:50%;border:1px solid #dcdcdc;box-shadow:0 1px 2px rgba(0,0,0,.25)"></div></div><div style="left:194.1px;top:486.2px;width:45px;height:22px;border:1px solid #e9e86c;border-radius:3px;background:#fff"><div class="c" style="left:21.5px;top:10.3px;color:#e9e86c;font-size:12px">admin</div></div><div style="left:69px;top:0px;width:5px;height:520px;background:linear-gradient(90deg,rgba(0,0,0,.09),rgba(0,0,0,0))"></div><div style="left:238.6px;top:0px;width:65.4px;height:35px;background:#efefef"></div><div class="c" style="left:270.7px;top:18.5px;font-weight:bold;font-size:14px;color:#333">操作</div><div style="left:238.6px;top:35px;width:65.4px;height:49px;background:#fff;border-bottom:1px solid #ebedf7"></div><svg style="left:254.3px;top:53.5px" width="12" height="12" viewBox="0 0 12 12" fill="none" stroke="#2aa88a" stroke-width="1.1" stroke-linecap="round"><path d="M6.800 1.300H1.800a1.200 1.200 0 0 0-1.200 1.200v8a1.200 1.200 0 0 0 1.200 1.200h8a1.200 1.200 0 0 0 1.200-1.200V5.500"/><path d="M5 7.600L11.800 0.400"/></svg><svg style="left:276.3px;top:53.4px" width="10.2" height="12.24" viewBox="0 0 10 12" fill="none" stroke="#ff4582" stroke-width="1"><path d="M0 2.500h10M3.300 2.300V0.600h3.400v1.700M1 2.800l0.600 8.600h6.800l0.600-8.600"/><path d="M3.400 4.200v5.600M5 4.200v5.600M6.600 4.200v5.600" stroke-width="0.800"/></svg><div style="left:238.6px;top:84px;width:65.4px;height:49px;background:#fafafa;border-bottom:1px solid #ebedf7"></div><svg style="left:254.3px;top:102.5px" width="12" height="12" viewBox="0 0 12 12" fill="none" stroke="#2aa88a" stroke-width="1.1" stroke-linecap="round"><path d="M6.800 1.300H1.800a1.200 1.200 0 0 0-1.200 1.200v8a1.200 1.200 0 0 0 1.200 1.200h8a1.200 1.200 0 0 0 1.200-1.200V5.500"/><path d="M5 7.600L11.800 0.400"/></svg><svg style="left:276.3px;top:102.4px" width="10.2" height="12.24" viewBox="0 0 10 12" fill="none" stroke="#ff4582" stroke-width="1"><path d="M0 2.500h10M3.300 2.300V0.600h3.400v1.700M1 2.800l0.600 8.600h6.800l0.600-8.600"/><path d="M3.400 4.200v5.600M5 4.200v5.600M6.600 4.200v5.600" stroke-width="0.800"/></svg><div style="left:238.6px;top:133px;width:65.4px;height:49px;background:#fff;border-bottom:1px solid #ebedf7"></div><svg style="left:254.3px;top:151.5px" width="12" height="12" viewBox="0 0 12 12" fill="none" stroke="#2aa88a" stroke-width="1.1" stroke-linecap="round"><path d="M6.800 1.300H1.800a1.200 1.200 0 0 0-1.200 1.200v8a1.200 1.200 0 0 0 1.200 1.200h8a1.200 1.200 0 0 0 1.200-1.200V5.500"/><path d="M5 7.600L11.800 0.400"/></svg><svg style="left:276.3px;top:151.4px" width="10.2" height="12.24" viewBox="0 0 10 12" fill="none" stroke="#ff4582" stroke-width="1"><path d="M0 2.500h10M3.300 2.300V0.600h3.400v1.700M1 2.800l0.600 8.600h6.800l0.600-8.600"/><path d="M3.400 4.200v5.600M5 4.200v5.600M6.600 4.200v5.600" stroke-width="0.800"/></svg><div style="left:238.6px;top:182px;width:65.4px;height:49px;background:#fafafa;border-bottom:1px solid #ebedf7"></div><svg style="left:254.3px;top:200.5px" width="12" height="12" viewBox="0 0 12 12" fill="none" stroke="#2aa88a" stroke-width="1.1" stroke-linecap="round"><path d="M6.800 1.300H1.800a1.200 1.200 0 0 0-1.200 1.200v8a1.200 1.200 0 0 0 1.200 1.200h8a1.200 1.200 0 0 0 1.200-1.200V5.500"/><path d="M5 7.600L11.800 0.400"/></svg><svg style="left:276.3px;top:200.4px" width="10.2" height="12.24" viewBox="0 0 10 12" fill="none" stroke="#ff4582" stroke-width="1"><path d="M0 2.500h10M3.300 2.300V0.600h3.400v1.700M1 2.800l0.600 8.600h6.800l0.600-8.600"/><path d="M3.400 4.200v5.600M5 4.200v5.600M6.600 4.200v5.600" stroke-width="0.800"/></svg><div style="left:238.6px;top:231px;width:65.4px;height:49px;background:#fff;border-bottom:1px solid #ebedf7"></div><svg style="left:254.3px;top:249.5px" width="12" height="12" viewBox="0 0 12 12" fill="none" stroke="#2aa88a" stroke-width="1.1" stroke-linecap="round"><path d="M6.800 1.300H1.800a1.200 1.200 0 0 0-1.200 1.200v8a1.200 1.200 0 0 0 1.200 1.200h8a1.200 1.200 0 0 0 1.200-1.200V5.500"/><path d="M5 7.600L11.800 0.400"/></svg><svg style="left:276.3px;top:249.4px" width="10.2" height="12.24" viewBox="0 0 10 12" fill="none" stroke="#ff4582" stroke-width="1"><path d="M0 2.500h10M3.300 2.300V0.600h3.400v1.700M1 2.800l0.600 8.600h6.800l0.600-8.600"/><path d="M3.400 4.200v5.600M5 4.200v5.600M6.600 4.200v5.600" stroke-width="0.800"/></svg><div style="left:238.6px;top:280px;width:65.4px;height:51px;background:#fafafa;border-bottom:1px solid #ebedf7"></div><svg style="left:254.3px;top:299.5px" width="12" height="12" viewBox="0 0 12 12" fill="none" stroke="#2aa88a" stroke-width="1.1" stroke-linecap="round"><path d="M6.800 1.300H1.800a1.200 1.200 0 0 0-1.200 1.200v8a1.200 1.200 0 0 0 1.200 1.200h8a1.200 1.200 0 0 0 1.200-1.200V5.500"/><path d="M5 7.600L11.800 0.400"/></svg><svg style="left:276.3px;top:299.4px" width="10.2" height="12.24" viewBox="0 0 10 12" fill="none" stroke="#ff4582" stroke-width="1"><path d="M0 2.500h10M3.300 2.300V0.600h3.400v1.700M1 2.800l0.600 8.600h6.800l0.600-8.600"/><path d="M3.400 4.200v5.600M5 4.200v5.600M6.600 4.200v5.600" stroke-width="0.800"/></svg><div style="left:238.6px;top:331px;width:65.4px;height:49px;background:#fff;border-bottom:1px solid #ebedf7"></div><svg style="left:254.3px;top:349.5px" width="12" height="12" viewBox="0 0 12 12" fill="none" stroke="#2aa88a" stroke-width="1.1" stroke-linecap="round"><path d="M6.800 1.300H1.800a1.200 1.200 0 0 0-1.200 1.200v8a1.200 1.200 0 0 0 1.200 1.200h8a1.200 1.200 0 0 0 1.200-1.200V5.500"/><path d="M5 7.600L11.800 0.400"/></svg><svg style="left:276.3px;top:349.4px" width="10.2" height="12.24" viewBox="0 0 10 12" fill="none" stroke="#ff4582" stroke-width="1"><path d="M0 2.500h10M3.300 2.300V0.600h3.400v1.700M1 2.800l0.600 8.600h6.800l0.600-8.600"/><path d="M3.400 4.200v5.600M5 4.200v5.600M6.600 4.200v5.600" stroke-width="0.800"/></svg><div style="left:238.6px;top:380px;width:65.4px;height:49px;background:#fafafa;border-bottom:1px solid #ebedf7"></div><svg style="left:254.3px;top:398.5px" width="12" height="12" viewBox="0 0 12 12" fill="none" stroke="#2aa88a" stroke-width="1.1" stroke-linecap="round"><path d="M6.800 1.300H1.800a1.200 1.200 0 0 0-1.200 1.200v8a1.200 1.200 0 0 0 1.200 1.200h8a1.200 1.200 0 0 0 1.200-1.200V5.500"/><path d="M5 7.600L11.800 0.400"/></svg><svg style="left:276.3px;top:398.4px" width="10.2" height="12.24" viewBox="0 0 10 12" fill="none" stroke="#ff4582" stroke-width="1"><path d="M0 2.500h10M3.300 2.300V0.600h3.400v1.700M1 2.800l0.600 8.600h6.800l0.600-8.600"/><path d="M3.400 4.200v5.600M5 4.200v5.600M6.600 4.200v5.600" stroke-width="0.800"/></svg><div style="left:238.6px;top:429px;width:65.4px;height:45px;background:#fff;border-bottom:1px solid #ebedf7"></div><svg style="left:254.3px;top:445.5px" width="12" height="12" viewBox="0 0 12 12" fill="none" stroke="#2aa88a" stroke-width="1.1" stroke-linecap="round"><path d="M6.800 1.300H1.800a1.200 1.200 0 0 0-1.200 1.200v8a1.200 1.200 0 0 0 1.200 1.200h8a1.200 1.200 0 0 0 1.200-1.200V5.500"/><path d="M5 7.600L11.800 0.400"/></svg><svg style="left:276.3px;top:445.4px" width="10.2" height="12.24" viewBox="0 0 10 12" fill="none" stroke="#ff4582" stroke-width="1"><path d="M0 2.500h10M3.300 2.300V0.600h3.400v1.700M1 2.800l0.600 8.600h6.800l0.600-8.600"/><path d="M3.400 4.200v5.600M5 4.200v5.600M6.600 4.200v5.600" stroke-width="0.800"/></svg><div style="left:238.6px;top:474px;width:65.4px;height:46px;background:#fafafa;border-bottom:1px solid #ebedf7"></div><svg style="left:254.3px;top:491px" width="12" height="12" viewBox="0 0 12 12" fill="none" stroke="#2aa88a" stroke-width="1.1" stroke-linecap="round"><path d="M6.800 1.300H1.800a1.200 1.200 0 0 0-1.200 1.200v8a1.200 1.200 0 0 0 1.200 1.200h8a1.200 1.200 0 0 0 1.200-1.200V5.500"/><path d="M5 7.600L11.800 0.400"/></svg><svg style="left:276.3px;top:490.9px" width="10.2" height="12.24" viewBox="0 0 10 12" fill="none" stroke="#ff4582" stroke-width="1"><path d="M0 2.500h10M3.300 2.300V0.600h3.400v1.700M1 2.800l0.600 8.600h6.800l0.600-8.600"/><path d="M3.400 4.200v5.600M5 4.200v5.600M6.600 4.200v5.600" stroke-width="0.800"/></svg><div style="left:233.6px;top:0px;width:5px;height:520px;background:linear-gradient(270deg,rgba(0,0,0,.09),rgba(0,0,0,0))"></div><div style="left:296px;top:5px;width:3px;height:240px;background:#bcbcbc"></div><div style="left:110px;top:492px;width:55px;height:3px;background:#b4b4b4"></div><div style="left:0px;top:0px;width:1px;height:520px;background:#ebedf7"></div><div style="left:303px;top:0px;width:1px;height:520px;background:#ebedf7"></div><div style="left:0px;top:498.5px;width:304px;height:1px;background:#ebedf7"></div></div></div><div class="sim" style="left:423px;top:197px;width:520px;height:392px;"><div class="t" style="left:6.4px;top:27px;color:#0a0aff;font-weight:bold;font-size:10.600px">综合表格</div><div class="grad" style="left:0px;top:0px;width:520px;height:31px;"></div><div class="t" style="left:9.4px;top:16px;color:#fff;font-size:10.950px">uniapp+vue3自定义table表格组件</div><div style="left:6.4px;top:38.3px;width:507px;height:347.3px;overflow:hidden"><div style="left:0px;top:0px;width:507px;height:24.65px;background:#efefef"></div><div class="t" style="left:84.3px;top:13.4px;font-weight:bold;font-size:9.700px;color:#333">标题</div><div class="c" style="left:364.9px;top:13.4px;font-weight:bold;font-size:9.700px;color:#333">图片</div><div class="c" style="left:421.4px;top:13.4px;font-weight:bold;font-size:9.700px;color:#333">推荐</div><div class="c" style="left:451.9px;top:13.4px;font-weight:bold;font-size:9.700px;color:#333">标签</div><div style="left:0px;top:24.65px;width:507px;height:31.9px;background:#fff;border-bottom:1px solid #ebedf7"></div><div class="t" style="left:84.3px;top:41.95px;font-size:9.700px;color:#606266">要算子儿运流果团先质水年速及的于到布半值部道</div><svg style="left:352.6px;top:27.35px;background:#05090b" width="24.6" height="24.6" viewBox="0 0 34 34" preserveAspectRatio="none"><g style="filter:blur(0.7px)"><polygon points="8,18 34,9 34,30 12,31" fill="#1d4f49"/><ellipse cx="15" cy="15.5" rx="8" ry="3" fill="#e8eef0"/><ellipse cx="22" cy="13" rx="5" ry="2" fill="#cfd8da" opacity="0.8"/><rect x="32" y="10" width="2" height="20" fill="#c9a8a8" opacity="0.6"/><rect x="0" y="29" width="34" height="5" fill="#030506"/></g></svg><div style="left:409.6px;top:33.65px;width:22px;height:14px;background:#fdfdfd;border:1px solid #e3e3e3;border-radius:7px"><div style="left:-1px;top:-1px;width:14px;height:14px;background:#fff;border-radius:50%;border:1px solid #dcdcdc;box-shadow:0 1px 2px rgba(0,0,0,.25)"></div></div><div style="left:435.9px;top:33.95px;width:32px;height:14.2px;border:1px solid #f0a060;border-radius:2px;background:#fff"><div class="c" style="left:15px;top:6.4px;color:#f0a060;font-size:8.3px">admin</div></div><div style="left:0px;top:56.55px;width:507px;height:32px;background:#fafafa;border-bottom:1px solid #ebedf7"></div><div class="t" style="left:84.3px;top:73.9px;font-size:9.700px;color:#606266">克自题应京称前七场十构金发增外总制斗展于持接安至</div><svg style="left:352.6px;top:59.3px;background:linear-gradient(#e9dfee 0%,#f1e4ec 50%,#d6e6ea 70%,#4d8a90 84%,#2f6a70 100%)" width="24.6" height="24.6" viewBox="0 0 34 34" preserveAspectRatio="none"><g style="filter:blur(0.7px)"><polygon points="0,28 6,24 16,26 22,28 34,27 34,30 0,30" fill="#5e7f78"/><path d="M0 6L23 28" stroke="#15202a" stroke-width="4" fill="none"/><path d="M0 9C8 14 16 22 21 27" stroke="#3a4650" stroke-width="0.8" fill="none"/><rect x="20" y="16" width="1.6" height="12" fill="#7a2f2a"/></g></svg><div style="left:409.6px;top:65.6px;width:22px;height:14px;background:#1677ff;border-radius:7px"><div style="left:9px;top:1px;width:12px;height:12px;background:#fff;border-radius:50%;box-shadow:0 1px 2px rgba(0,0,0,.3)"></div></div><div style="left:435.9px;top:65.9px;width:32px;height:14.2px;border:1px solid #8a7cf0;border-radius:2px;background:#fff"><div class="c" style="left:15px;top:6.4px;color:#8a7cf0;font-size:8.3px">admin</div></div><div style="left:0px;top:88.55px;width:507px;height:35.3px;background:#fff;border-bottom:1px solid #ebedf7"></div><div class="t" style="left:84.3px;top:100.65px;font-size:9.700px;color:#606266">大委自见即各据往东金图些直线统厂济且联参权求同马</div><div class="t" style="left:84.3px;top:114.25px;font-size:9.700px;color:#606266">地连认构提面按她战统自并选与和价派运展话油领定</div><svg style="left:352.6px;top:92.95px;background:#2a443c" width="24.6" height="24.6" viewBox="0 0 34 34" preserveAspectRatio="none"><g style="filter:blur(0.7px)"><ellipse cx="24" cy="7" rx="10" ry="7" fill="#5f8a60"/><rect x="0" y="0" width="8" height="34" fill="#1c302a" opacity="0.8"/><ellipse cx="16" cy="25" rx="12" ry="4" fill="#cfe2e2"/><ellipse cx="10" cy="22" rx="5" ry="2" fill="#e6f0f0" opacity="0.8"/><rect x="0" y="30" width="34" height="4" fill="#16262a"/></g></svg><div style="left:409.6px;top:99.25px;width:22px;height:14px;background:#fdfdfd;border:1px solid #e3e3e3;border-radius:7px"><div style="left:-1px;top:-1px;width:14px;height:14px;background:#fff;border-radius:50%;border:1px solid #dcdcdc;box-shadow:0 1px 2px rgba(0,0,0,.25)"></div></div><div style="left:440.6px;top:99.55px;width:22.6px;height:14.2px;border:1px solid #80e880;border-radius:2px;background:#fff"><div class="c" style="left:10.3px;top:6.4px;color:#80e880;font-size:8.3px">dev</div></div><div style="left:0px;top:123.85px;width:507px;height:35.3px;background:#fafafa;border-bottom:1px solid #ebedf7"></div><div style="left:80.2px;top:123.85px;width:242.6px;height:34.8px;background:#07c160"></div><div class="t" style="left:84.3px;top:135.95px;font-size:9.700px;color:#fff;font-weight:bold">候元又质打子且声会元式义先利术件装个面史展然行者</div><div class="t" style="left:84.3px;top:149.55px;font-size:9.700px;color:#fff;font-weight:bold">厂它知没色六西两素叫党门商织强手</div><svg style="left:352.6px;top:128.25px;background:linear-gradient(#cfc9b4 0%,#b9b3a8 30%,#8a6f8c 50%,#6b3f7c 75%,#4d2a63 100%)" width="24.6" height="24.6" viewBox="0 0 34 34" preserveAspectRatio="none"><g style="filter:blur(0.7px)"><polygon points="0,19 34,13 34,18 0,25" fill="#a9a0a8" opacity="0.8"/><polygon points="0,25 34,18 34,22 0,29" fill="#7a4f8a" opacity="0.7"/></g></svg><div style="left:409.6px;top:134.55px;width:22px;height:14px;background:#fdfdfd;border:1px solid #e3e3e3;border-radius:7px"><div style="left:-1px;top:-1px;width:14px;height:14px;background:#fff;border-radius:50%;border:1px solid #dcdcdc;box-shadow:0 1px 2px rgba(0,0,0,.25)"></div></div><div style="left:440.6px;top:134.85px;width:22.6px;height:14.2px;border:1px solid #f06890;border-radius:2px;background:#fff"><div class="c" style="left:10.3px;top:6.4px;color:#f06890;font-size:8.3px">test</div></div><div style="left:0px;top:159.15px;width:507px;height:35.2px;background:#fff;border-bottom:1px solid #ebedf7"></div><div class="t" style="left:84.3px;top:171.2px;font-size:9.700px;color:#606266">调全安意界她用老听西与革族只真议海须点值精条量日</div><div class="t" style="left:84.3px;top:184.8px;font-size:9.700px;color:#606266">工果统领总过取道历团识还公基龙志通过际院应两眼</div><svg style="left:352.6px;top:163.5px;background:linear-gradient(#9fb1c2 0%,#dfe5ea 28%,#f2f4f6 42%,#9aa2a8 55%,#2b3136 75%,#0e1114 100%)" width="24.6" height="24.6" viewBox="0 0 34 34" preserveAspectRatio="none"><g style="filter:blur(0.7px)"><ellipse cx="10" cy="8" rx="9" ry="3" fill="#ffffff" opacity="0.7"/><polygon points="0,20 12,15 22,19 34,14 34,24 0,26" fill="#5a646c" opacity="0.8"/><polygon points="0,34 4,26 8,31 12,25 16,31 20,26 24,31 28,26 34,34" fill="#0a0c0e"/></g></svg><div style="left:409.6px;top:169.8px;width:22px;height:14px;background:#1677ff;border-radius:7px"><div style="left:9px;top:1px;width:12px;height:12px;background:#fff;border-radius:50%;box-shadow:0 1px 2px rgba(0,0,0,.3)"></div></div><div style="left:440.6px;top:170.1px;width:22.6px;height:14.2px;border:1px solid #70c0f0;border-radius:2px;background:#fff"><div class="c" style="left:10.3px;top:6.4px;color:#70c0f0;font-size:8.3px">test</div></div><div style="left:0px;top:194.35px;width:507px;height:36.7px;background:#fafafa;border-bottom:1px solid #ebedf7"></div><div style="left:80.2px;top:194.85px;width:242.6px;height:35.2px;background:#fff7cc;border:1px solid #f6b84e"></div><div class="t" style="left:84.3px;top:207.15px;font-size:9.700px;color:#f5222d;font-weight:bold">按关文细都王走子委金水到近边那别才百能队很周加走</div><div class="t" style="left:84.3px;top:220.75px;font-size:9.700px;color:#f5222d;font-weight:bold">集流流题化型传清它维治率论音而音生方科装断老</div><svg style="left:352.6px;top:199.45px;background:linear-gradient(#5f7f9a 0%,#c9d3da 22%,#e6e2d2 34%,#5e5a36 42%,#3a3a20 70%,#57502c 100%)" width="24.6" height="24.6" viewBox="0 0 34 34" preserveAspectRatio="none"><g style="filter:blur(0.7px)"><rect x="20" y="0" width="14" height="7" fill="#2a2a1a" opacity="0.85"/><path d="M0 26C10 22 20 24 34 20" stroke="#7a7040" stroke-width="1.2" fill="none"/><polygon points="0,12 14,10 34,13 34,15 0,15" fill="#8a8a78" opacity="0.7"/></g></svg><div style="left:409.6px;top:205.75px;width:22px;height:14px;background:#1677ff;border-radius:7px"><div style="left:9px;top:1px;width:12px;height:12px;background:#fff;border-radius:50%;box-shadow:0 1px 2px rgba(0,0,0,.3)"></div></div><div style="left:440.6px;top:206.05px;width:22.6px;height:14.2px;border:1px solid #f0e080;border-radius:2px;background:#fff"><div class="c" style="left:10.3px;top:6.4px;color:#f0e080;font-size:8.3px">dev</div></div><div style="left:0px;top:231.05px;width:507px;height:35.8px;background:#fff;border-bottom:1px solid #ebedf7"></div><div class="t" style="left:84.3px;top:243.4px;font-size:9.700px;color:#606266">权引易更北听许部斗么下织研低系研水复第便活究家很</div><div class="t" style="left:84.3px;top:257px;font-size:9.700px;color:#606266">采机况质建史被复厂</div><svg style="left:352.6px;top:235.7px;background:linear-gradient(#4a2f4c 0%,#6a4560 30%,#8d6a70 40%,#b9855a 55%,#c99a64 70%,#8a5f3c 100%)" width="24.6" height="24.6" viewBox="0 0 34 34" preserveAspectRatio="none"><g style="filter:blur(0.7px)"><polygon points="15,13 19,13 31,34 3,34" fill="#dcb888" opacity="0.55"/><rect x="0" y="11" width="34" height="3" fill="#c9b0a0" opacity="0.5"/><path d="M17 14L10 34M17 14L24 34" stroke="#7a4a30" stroke-width="0.8" fill="none"/><rect x="0" y="0" width="34" height="3" fill="#5a2f3a"/></g></svg><div style="left:409.6px;top:242px;width:22px;height:14px;background:#fdfdfd;border:1px solid #e3e3e3;border-radius:7px"><div style="left:-1px;top:-1px;width:14px;height:14px;background:#fff;border-radius:50%;border:1px solid #dcdcdc;box-shadow:0 1px 2px rgba(0,0,0,.25)"></div></div><div style="left:440.6px;top:242.3px;width:22.6px;height:14.2px;border:1px solid #b070f0;border-radius:2px;background:#fff"><div class="c" style="left:10.3px;top:6.4px;color:#b070f0;font-size:8.3px">dev</div></div><div style="left:0px;top:266.85px;width:507px;height:31.8px;background:#fafafa;border-bottom:1px solid #ebedf7"></div><div class="t" style="left:84.3px;top:284.1px;font-size:9.700px;color:#606266">各与发便局毛中维信权期</div><svg style="left:352.6px;top:269.5px;background:#f3f6f2" width="24.6" height="24.6" viewBox="0 0 34 34" preserveAspectRatio="none"><g style="filter:blur(0.7px)"><rect x="0" y="12" width="18" height="22" fill="#3f7186"/><rect x="1.5" y="14" width="15" height="2.5" fill="#7aa3b2"/><rect x="1.5" y="19" width="15" height="2.5" fill="#6a96a6"/><rect x="1.5" y="24" width="15" height="2.5" fill="#7aa3b2"/><rect x="1.5" y="29" width="15" height="2.5" fill="#5c8898"/><ellipse cx="27" cy="29" rx="8" ry="6" fill="#e2d8da" opacity="0.9"/><rect x="18" y="26" width="6" height="8" fill="#9ab0b8" opacity="0.6"/></g></svg><div style="left:409.6px;top:275.8px;width:22px;height:14px;background:#1677ff;border-radius:7px"><div style="left:9px;top:1px;width:12px;height:12px;background:#fff;border-radius:50%;box-shadow:0 1px 2px rgba(0,0,0,.3)"></div></div><div style="left:440.6px;top:276.1px;width:22.6px;height:14.2px;border:1px solid #80e8a0;border-radius:2px;background:#fff"><div class="c" style="left:10.3px;top:6.4px;color:#80e8a0;font-size:8.3px">dev</div></div><div style="left:0px;top:298.65px;width:507px;height:31.7px;background:#fff;border-bottom:1px solid #ebedf7"></div><div class="t" style="left:84.3px;top:315.85px;font-size:9.700px;color:#606266">连的一水与毛只存究律改</div><svg style="left:352.6px;top:301.25px;background:linear-gradient(#2f4657 0%,#5a7686 18%,#c9d8d2 30%,#e4ece6 45%,#4a5a66 55%,#33424f 100%)" width="24.6" height="24.6" viewBox="0 0 34 34" preserveAspectRatio="none"><g style="filter:blur(0.7px)"><rect x="12" y="5" width="12" height="6" fill="#eef2e6"/><rect x="0" y="11" width="34" height="2" fill="#26343f"/><ellipse cx="14" cy="29" rx="10" ry="5" fill="none" stroke="#c9d4cf" stroke-width="2"/><rect x="24" y="20" width="10" height="14" fill="#8fa8a8" opacity="0.6"/></g></svg><div style="left:409.6px;top:307.55px;width:22px;height:14px;background:#fdfdfd;border:1px solid #e3e3e3;border-radius:7px"><div style="left:-1px;top:-1px;width:14px;height:14px;background:#fff;border-radius:50%;border:1px solid #dcdcdc;box-shadow:0 1px 2px rgba(0,0,0,.25)"></div></div><div style="left:435.9px;top:307.85px;width:32px;height:14.2px;border:1px solid #f07060;border-radius:2px;background:#fff"><div class="c" style="left:15px;top:6.4px;color:#f07060;font-size:8.3px">admin</div></div><div style="left:0px;top:330.35px;width:507px;height:32px;background:#fafafa;border-bottom:1px solid #ebedf7"></div><div class="t" style="left:84.3px;top:347.7px;font-size:9.700px;color:#606266">列联者即她许次转据南前什下只此极解称着里以层温直</div><svg style="left:352.6px;top:333.1px;background:linear-gradient(90deg,#c7a77c 0%,#a08460 15%,#d9cdb8 38%,#eee6d8 58%,#3a2e2a 72%,#1a1614 100%)" width="24.6" height="24.6" viewBox="0 0 34 34" preserveAspectRatio="none"><g style="filter:blur(0.7px)"><rect x="0" y="8" width="8" height="26" fill="#7a5e44"/><rect x="0" y="0" width="34" height="3" fill="#efe8dc" opacity="0.8"/><rect x="10" y="22" width="14" height="12" fill="#8d8478" opacity="0.7"/></g></svg><div style="left:409.6px;top:339.4px;width:22px;height:14px;background:#fdfdfd;border:1px solid #e3e3e3;border-radius:7px"><div style="left:-1px;top:-1px;width:14px;height:14px;background:#fff;border-radius:50%;border:1px solid #dcdcdc;box-shadow:0 1px 2px rgba(0,0,0,.25)"></div></div><div style="left:440.6px;top:339.7px;width:22.6px;height:14.2px;border:1px solid #6080f0;border-radius:2px;background:#fff"><div class="c" style="left:10.3px;top:6.4px;color:#6080f0;font-size:8.3px">test</div></div><div style="left:0px;top:0px;width:49px;height:24.65px;background:#efefef"></div><div class="c" style="left:37.1px;top:13.4px;font-weight:bold;font-size:9.700px;color:#333">ID</div><div style="left:49px;top:0px;width:31.2px;height:24.65px;background:#efefef"></div><div class="t" style="left:52.9px;top:13.4px;font-weight:bold;font-size:9.700px;color:#333">作者</div><div style="left:5.6px;top:6px;width:11.8px;height:11.8px;background:#fff;border:1px solid #dcdfe6;border-radius:2px"></div><div style="left:0px;top:24.65px;width:80.2px;height:31.9px;background:#fff;border-bottom:1px solid #ebedf7"></div><div style="left:5.6px;top:34.75px;width:11.8px;height:11.8px;background:#fff;border:1px solid #dcdfe6;border-radius:2px"></div><div class="c" style="left:37.6px;top:40.95px;font-size:9.700px;color:#606266">1</div><div class="t" style="left:52.9px;top:41.95px;font-size:9.700px;color:#606266">雷涛</div><div style="left:0px;top:56.55px;width:80.2px;height:32px;background:#fafafa;border-bottom:1px solid #ebedf7"></div><div style="left:5.6px;top:66.7px;width:11.8px;height:11.8px;background:#fff;border:1px solid #dcdfe6;border-radius:2px"></div><div class="c" style="left:37.6px;top:72.9px;font-size:9.700px;color:#606266">2</div><div style="left:49px;top:56.55px;width:31.2px;height:31.5px;background:#ff5ca5"></div><div class="t" style="left:52.9px;top:73.9px;font-size:9.700px;color:#fff">朱芳</div><div style="left:0px;top:88.55px;width:80.2px;height:35.3px;background:#fff;border-bottom:1px solid #ebedf7"></div><div style="left:5.6px;top:100.35px;width:11.8px;height:11.8px;background:#fff;border:1px solid #dcdfe6;border-radius:2px"></div><div class="c" style="left:37.6px;top:106.55px;font-size:9.700px;color:#606266">3</div><div class="t" style="left:52.9px;top:107.55px;font-size:9.700px;color:#606266">常超</div><div style="left:0px;top:123.85px;width:80.2px;height:35.3px;background:#fafafa;border-bottom:1px solid #ebedf7"></div><div style="left:5.6px;top:135.65px;width:11.8px;height:11.8px;background:#fff;border:1px solid #dcdfe6;border-radius:2px"></div><div class="c" style="left:37.6px;top:141.85px;font-size:9.700px;color:#606266">4</div><div class="t" style="left:52.9px;top:142.85px;font-size:9.700px;color:#606266">邓超</div><div style="left:0px;top:159.15px;width:80.2px;height:35.2px;background:#fff;border-bottom:1px solid #ebedf7"></div><div style="left:5.6px;top:170.9px;width:11.8px;height:11.8px;background:#fff;border:1px solid #dcdfe6;border-radius:2px"></div><div class="c" style="left:37.6px;top:177.1px;font-size:9.700px;color:#606266">5</div><div class="t" style="left:52.9px;top:178.1px;font-size:9.700px;color:#606266">魏勇</div><div style="left:0px;top:194.35px;width:80.2px;height:36.7px;background:#fafafa;border-bottom:1px solid #ebedf7"></div><div style="left:5.6px;top:206.85px;width:11.8px;height:11.8px;background:#fff;border:1px solid #dcdfe6;border-radius:2px"></div><div class="c" style="left:37.6px;top:213.05px;font-size:9.700px;color:#606266">6</div><div class="t" style="left:52.9px;top:214.05px;font-size:9.700px;color:#606266">傅洋</div><div style="left:0px;top:231.05px;width:80.2px;height:35.8px;background:#fff;border-bottom:1px solid #ebedf7"></div><div style="left:5.6px;top:243.1px;width:11.8px;height:11.8px;background:#fff;border:1px solid #dcdfe6;border-radius:2px"></div><div class="c" style="left:37.6px;top:249.3px;font-size:9.700px;color:#606266">7</div><div class="t" style="left:52.9px;top:250.3px;font-size:9.700px;color:#606266">袁磊</div><div style="left:0px;top:266.85px;width:80.2px;height:31.8px;background:#fafafa;border-bottom:1px solid #ebedf7"></div><div style="left:5.6px;top:276.9px;width:11.8px;height:11.8px;background:#fff;border:1px solid #dcdfe6;border-radius:2px"></div><div class="c" style="left:37.6px;top:283.1px;font-size:9.700px;color:#606266">8</div><div class="t" style="left:52.9px;top:284.1px;font-size:9.700px;color:#606266">武平</div><div style="left:0px;top:298.65px;width:80.2px;height:31.7px;background:#fff;border-bottom:1px solid #ebedf7"></div><div style="left:5.6px;top:308.65px;width:11.8px;height:11.8px;background:#fff;border:1px solid #dcdfe6;border-radius:2px"></div><div class="c" style="left:37.6px;top:314.85px;font-size:9.700px;color:#606266">9</div><div class="t" style="left:52.9px;top:315.85px;font-size:9.700px;color:#606266">黎磊</div><div style="left:0px;top:330.35px;width:80.2px;height:32px;background:#fafafa;border-bottom:1px solid #ebedf7"></div><div style="left:5.6px;top:340.5px;width:11.8px;height:11.8px;background:#fff;border:1px solid #dcdfe6;border-radius:2px"></div><div class="c" style="left:37.6px;top:346.7px;font-size:9.700px;color:#606266">10</div><div class="t" style="left:52.9px;top:347.7px;font-size:9.700px;color:#606266">孙杰</div><div style="left:49px;top:0px;width:4px;height:400px;background:linear-gradient(90deg,rgba(0,0,0,.09),rgba(0,0,0,0))"></div><div style="left:461.4px;top:0px;width:45.6px;height:24.65px;background:#efefef"></div><div class="c" style="left:484.6px;top:13.4px;font-weight:bold;font-size:9.700px;color:#333">操作</div><div style="left:461.4px;top:24.65px;width:45.6px;height:31.9px;background:#fff;border-bottom:1px solid #ebedf7"></div><svg style="left:472.8px;top:35.75px" width="9" height="9" viewBox="0 0 12 12" fill="none" stroke="#2aa88a" stroke-width="1.1" stroke-linecap="round"><path d="M6.800 1.300H1.800a1.200 1.200 0 0 0-1.200 1.200v8a1.200 1.200 0 0 0 1.200 1.200h8a1.200 1.200 0 0 0 1.200-1.200V5.500"/><path d="M5 7.600L11.800 0.400"/></svg><svg style="left:487.9px;top:36.05px" width="7.3" height="8.76" viewBox="0 0 10 12" fill="none" stroke="#ff4582" stroke-width="1"><path d="M0 2.500h10M3.300 2.300V0.600h3.400v1.700M1 2.800l0.600 8.600h6.800l0.600-8.600"/><path d="M3.400 4.200v5.600M5 4.200v5.600M6.600 4.200v5.600" stroke-width="0.800"/></svg><div style="left:461.4px;top:56.55px;width:45.6px;height:32px;background:#fafafa;border-bottom:1px solid #ebedf7"></div><svg style="left:472.8px;top:67.7px" width="9" height="9" viewBox="0 0 12 12" fill="none" stroke="#2aa88a" stroke-width="1.1" stroke-linecap="round"><path d="M6.800 1.300H1.800a1.200 1.200 0 0 0-1.200 1.200v8a1.200 1.200 0 0 0 1.200 1.200h8a1.200 1.200 0 0 0 1.200-1.200V5.500"/><path d="M5 7.600L11.800 0.400"/></svg><svg style="left:487.9px;top:68px" width="7.3" height="8.76" viewBox="0 0 10 12" fill="none" stroke="#ff4582" stroke-width="1"><path d="M0 2.500h10M3.300 2.300V0.600h3.400v1.700M1 2.800l0.600 8.600h6.800l0.600-8.600"/><path d="M3.400 4.200v5.600M5 4.200v5.600M6.600 4.200v5.600" stroke-width="0.800"/></svg><div style="left:461.4px;top:88.55px;width:45.6px;height:35.3px;background:#fff;border-bottom:1px solid #ebedf7"></div><svg style="left:472.8px;top:101.35px" width="9" height="9" viewBox="0 0 12 12" fill="none" stroke="#2aa88a" stroke-width="1.1" stroke-linecap="round"><path d="M6.800 1.300H1.800a1.200 1.200 0 0 0-1.200 1.200v8a1.200 1.200 0 0 0 1.200 1.200h8a1.200 1.200 0 0 0 1.200-1.200V5.500"/><path d="M5 7.600L11.800 0.400"/></svg><svg style="left:487.9px;top:101.65px" width="7.3" height="8.76" viewBox="0 0 10 12" fill="none" stroke="#ff4582" stroke-width="1"><path d="M0 2.500h10M3.300 2.300V0.600h3.400v1.700M1 2.800l0.600 8.600h6.800l0.600-8.600"/><path d="M3.400 4.200v5.600M5 4.200v5.600M6.600 4.200v5.600" stroke-width="0.800"/></svg><div style="left:461.4px;top:123.85px;width:45.6px;height:35.3px;background:#fafafa;border-bottom:1px solid #ebedf7"></div><svg style="left:472.8px;top:136.65px" width="9" height="9" viewBox="0 0 12 12" fill="none" stroke="#2aa88a" stroke-width="1.1" stroke-linecap="round"><path d="M6.800 1.300H1.800a1.200 1.200 0 0 0-1.200 1.200v8a1.200 1.200 0 0 0 1.200 1.200h8a1.200 1.200 0 0 0 1.200-1.200V5.500"/><path d="M5 7.600L11.800 0.400"/></svg><svg style="left:487.9px;top:136.95px" width="7.3" height="8.76" viewBox="0 0 10 12" fill="none" stroke="#ff4582" stroke-width="1"><path d="M0 2.500h10M3.300 2.300V0.600h3.400v1.700M1 2.800l0.600 8.600h6.800l0.600-8.600"/><path d="M3.400 4.200v5.600M5 4.200v5.600M6.600 4.200v5.600" stroke-width="0.800"/></svg><div style="left:461.4px;top:159.15px;width:45.6px;height:35.2px;background:#fff;border-bottom:1px solid #ebedf7"></div><svg style="left:472.8px;top:171.9px" width="9" height="9" viewBox="0 0 12 12" fill="none" stroke="#2aa88a" stroke-width="1.1" stroke-linecap="round"><path d="M6.800 1.300H1.800a1.200 1.200 0 0 0-1.200 1.200v8a1.200 1.200 0 0 0 1.200 1.200h8a1.200 1.200 0 0 0 1.200-1.200V5.500"/><path d="M5 7.600L11.800 0.400"/></svg><svg style="left:487.9px;top:172.2px" width="7.3" height="8.76" viewBox="0 0 10 12" fill="none" stroke="#ff4582" stroke-width="1"><path d="M0 2.500h10M3.300 2.300V0.600h3.400v1.700M1 2.800l0.600 8.600h6.800l0.600-8.600"/><path d="M3.400 4.200v5.600M5 4.200v5.600M6.600 4.200v5.600" stroke-width="0.800"/></svg><div style="left:461.4px;top:194.35px;width:45.6px;height:36.7px;background:#fafafa;border-bottom:1px solid #ebedf7"></div><svg style="left:472.8px;top:207.85px" width="9" height="9" viewBox="0 0 12 12" fill="none" stroke="#2aa88a" stroke-width="1.1" stroke-linecap="round"><path d="M6.800 1.300H1.800a1.200 1.200 0 0 0-1.200 1.200v8a1.200 1.200 0 0 0 1.200 1.200h8a1.200 1.200 0 0 0 1.200-1.200V5.500"/><path d="M5 7.600L11.800 0.400"/></svg><svg style="left:487.9px;top:208.15px" width="7.3" height="8.76" viewBox="0 0 10 12" fill="none" stroke="#ff4582" stroke-width="1"><path d="M0 2.500h10M3.300 2.300V0.600h3.400v1.700M1 2.800l0.600 8.600h6.800l0.600-8.600"/><path d="M3.400 4.200v5.600M5 4.200v5.600M6.600 4.200v5.600" stroke-width="0.800"/></svg><div style="left:461.4px;top:231.05px;width:45.6px;height:35.8px;background:#fff;border-bottom:1px solid #ebedf7"></div><svg style="left:472.8px;top:244.1px" width="9" height="9" viewBox="0 0 12 12" fill="none" stroke="#2aa88a" stroke-width="1.1" stroke-linecap="round"><path d="M6.800 1.300H1.800a1.200 1.200 0 0 0-1.200 1.200v8a1.200 1.200 0 0 0 1.200 1.200h8a1.200 1.200 0 0 0 1.200-1.200V5.500"/><path d="M5 7.600L11.800 0.400"/></svg><svg style="left:487.9px;top:244.4px" width="7.3" height="8.76" viewBox="0 0 10 12" fill="none" stroke="#ff4582" stroke-width="1"><path d="M0 2.500h10M3.300 2.300V0.600h3.400v1.700M1 2.800l0.600 8.600h6.800l0.600-8.600"/><path d="M3.400 4.200v5.600M5 4.200v5.600M6.600 4.200v5.600" stroke-width="0.800"/></svg><div style="left:461.4px;top:266.85px;width:45.6px;height:31.8px;background:#fafafa;border-bottom:1px solid #ebedf7"></div><svg style="left:472.8px;top:277.9px" width="9" height="9" viewBox="0 0 12 12" fill="none" stroke="#2aa88a" stroke-width="1.1" stroke-linecap="round"><path d="M6.800 1.300H1.800a1.200 1.200 0 0 0-1.200 1.200v8a1.200 1.200 0 0 0 1.200 1.200h8a1.200 1.200 0 0 0 1.200-1.200V5.500"/><path d="M5 7.600L11.800 0.400"/></svg><svg style="left:487.9px;top:278.2px" width="7.3" height="8.76" viewBox="0 0 10 12" fill="none" stroke="#ff4582" stroke-width="1"><path d="M0 2.500h10M3.300 2.300V0.600h3.400v1.700M1 2.800l0.600 8.600h6.800l0.600-8.600"/><path d="M3.400 4.200v5.600M5 4.200v5.600M6.600 4.200v5.600" stroke-width="0.800"/></svg><div style="left:461.4px;top:298.65px;width:45.6px;height:31.7px;background:#fff;border-bottom:1px solid #ebedf7"></div><svg style="left:472.8px;top:309.65px" width="9" height="9" viewBox="0 0 12 12" fill="none" stroke="#2aa88a" stroke-width="1.1" stroke-linecap="round"><path d="M6.800 1.300H1.800a1.200 1.200 0 0 0-1.200 1.200v8a1.200 1.200 0 0 0 1.200 1.200h8a1.200 1.200 0 0 0 1.200-1.200V5.500"/><path d="M5 7.600L11.800 0.400"/></svg><svg style="left:487.9px;top:309.95px" width="7.3" height="8.76" viewBox="0 0 10 12" fill="none" stroke="#ff4582" stroke-width="1"><path d="M0 2.500h10M3.300 2.300V0.600h3.400v1.700M1 2.800l0.600 8.600h6.800l0.600-8.600"/><path d="M3.400 4.200v5.600M5 4.200v5.600M6.600 4.200v5.600" stroke-width="0.800"/></svg><div style="left:461.4px;top:330.35px;width:45.6px;height:32px;background:#fafafa;border-bottom:1px solid #ebedf7"></div><svg style="left:472.8px;top:341.5px" width="9" height="9" viewBox="0 0 12 12" fill="none" stroke="#2aa88a" stroke-width="1.1" stroke-linecap="round"><path d="M6.800 1.300H1.800a1.200 1.200 0 0 0-1.200 1.200v8a1.200 1.200 0 0 0 1.200 1.200h8a1.200 1.200 0 0 0 1.200-1.200V5.500"/><path d="M5 7.600L11.800 0.400"/></svg><svg style="left:487.9px;top:341.8px" width="7.3" height="8.76" viewBox="0 0 10 12" fill="none" stroke="#ff4582" stroke-width="1"><path d="M0 2.500h10M3.300 2.300V0.600h3.400v1.700M1 2.800l0.600 8.600h6.800l0.600-8.600"/><path d="M3.400 4.200v5.600M5 4.200v5.600M6.600 4.200v5.600" stroke-width="0.800"/></svg><div style="left:457.4px;top:0px;width:4px;height:400px;background:linear-gradient(270deg,rgba(0,0,0,.09),rgba(0,0,0,0))"></div><div style="left:504px;top:2.7px;width:3px;height:157px;background:#bcbcbc"></div><div style="left:2.6px;top:344.3px;width:73px;height:2.5px;background:#a8a8a8"></div><div style="left:0px;top:0px;width:1px;height:400px;background:#ebedf7"></div><div style="left:506px;top:0px;width:1px;height:400px;background:#ebedf7"></div></div></div><div class="sim" style="left:956px;top:115px;width:312px;height:555px;"><div class="t" style="left:55px;top:63px;font-size:11.500px;color:#606266">斗育回历因构品国革院口反它什战</div><div style="left:8.5px;top:75.3px;width:295.7px;height:1px;background:#ebedf7"></div><div style="left:8.5px;top:76.3px;width:295.7px;height:13.4px;background:#fafafa;overflow:hidden"><div class="t" style="left:46.5px;top:12.7px;font-size:11.500px;color:#606266">南会其各军及示属件真改展握示本便</div></div><div style="left:240.5px;top:61px;width:1px;height:15px;background:#e4e4e4"></div><div class="grad" style="left:0px;top:0px;width:312px;height:61.4px;"></div><svg style="left:223px;top:3.500px" width="15" height="12" viewBox="0 0 15 12"><path d="M7.500 11.500L0 3a11 11 0 0 1 15 0z" fill="#173f6d"/></svg><svg style="left:243px;top:4px" width="11" height="11" viewBox="0 0 11 11"><path d="M3.500 0.500H10v10H1V3z" fill="#5e93c4"/><path d="M0.500 0.500l10 10" stroke="#173f6d" stroke-width="1.300"/></svg><div style="left:261.5px;top:4.6px;width:7.5px;height:10.4px;background:#173f6d;border-radius:1px"></div><div style="left:263.5px;top:3.4px;width:3.5px;height:1.6px;background:#173f6d"></div><div class="t" style="left:275px;top:10px;color:#173f6d;font-size:12px;font-weight:bold">00:09</div><div class="t" style="left:12.7px;top:41.5px;color:#fff;font-size:14.950px">uniapp+vue3自定义table表格组件</div><div class="t" style="left:9px;top:117.6px;color:#0a0aff;font-weight:bold;font-size:13.200px">综合表格</div><div style="left:8px;top:131px;width:296.5px;height:415.2px;overflow:hidden"><div style="left:0px;top:18.6px;width:296.5px;height:42.45px;background:#fafafa;border-bottom:1px solid #ebedf7"></div><div style="left:9.6px;top:32.63px;width:14.2px;height:14.2px;background:#fff;border:1px solid #dcdfe6;border-radius:2px"></div><div class="c" style="left:51px;top:39.13px;font-size:12px;color:#555">10</div><svg style="left:76px;top:22.63px;background:linear-gradient(#cfe3ee 0%,#bdd6c6 30%,#9fbf94 45%,#7fa070 60%,#8aa67a 100%)" width="33.4" height="33.4" viewBox="0 0 34 34" preserveAspectRatio="none"><g style="filter:blur(0.7px)"><polygon points="0,14 10,10 20,13 20,16 0,17" fill="#7d9a70"/><rect x="18" y="0" width="16" height="4" fill="#2f2a20"/><rect x="20" y="0" width="4" height="24" fill="#3b3325"/><rect x="28" y="0" width="6" height="22" fill="#4a4030"/><rect x="14" y="24" width="20" height="8" fill="#5a4a2a"/><rect x="14" y="23" width="20" height="1.5" fill="#8a7a4a"/><rect x="0" y="30" width="34" height="4" fill="#6f8f5e"/></g></svg><div style="left:149.4px;top:30.73px;width:26.6px;height:16.8px;background:#1677ff;border-radius:8.4px"><div style="left:10.8px;top:1px;width:14.8px;height:14.8px;background:#fff;border-radius:50%;box-shadow:0 1px 2px rgba(0,0,0,.3)"></div></div><div style="left:192.1px;top:30.13px;width:26.6px;height:18px;border:1px solid #f57fb0;border-radius:3px;background:#fff"><div class="c" style="left:12.3px;top:8.3px;color:#f57fb0;font-size:10.5px">test</div></div><svg style="left:250.3px;top:33.63px" width="10.8" height="10.8" viewBox="0 0 12 12" fill="none" stroke="#2aa88a" stroke-width="1.1" stroke-linecap="round"><path d="M6.800 1.300H1.800a1.200 1.200 0 0 0-1.200 1.200v8a1.200 1.200 0 0 0 1.200 1.200h8a1.200 1.200 0 0 0 1.200-1.200V5.500"/><path d="M5 7.600L11.800 0.400"/></svg><svg style="left:268.9px;top:33.73px" width="9" height="10.8" viewBox="0 0 10 12" fill="none" stroke="#ff4582" stroke-width="1"><path d="M0 2.500h10M3.300 2.300V0.600h3.400v1.700M1 2.800l0.600 8.600h6.800l0.600-8.600"/><path d="M3.400 4.200v5.600M5 4.200v5.600M6.600 4.200v5.600" stroke-width="0.800"/></svg><div style="left:0px;top:61.05px;width:296.5px;height:42.45px;background:#fff;border-bottom:1px solid #ebedf7"></div><div style="left:9.6px;top:75.08px;width:14.2px;height:14.2px;background:#1677ff;border:1px solid #1677ff;border-radius:2px"><svg style="left:2.500px;top:3.500px" width="9" height="7" viewBox="0 0 9 7" fill="none" stroke="#fff" stroke-width="1.400"><path d="M0.800 3.500l2.500 2.500 5-5.200"/></svg></div><div class="c" style="left:51px;top:81.58px;font-size:12px;color:#555">11</div><svg style="left:76px;top:65.08px;background:repeating-linear-gradient(0deg,rgba(0,0,0,.16) 0 1px,rgba(255,255,255,0) 1px 2.500px),repeating-linear-gradient(90deg,rgba(0,0,0,.16) 0 1px,rgba(255,255,255,0) 1px 3px),linear-gradient(90deg,#303030 0%,#7a7a7a 10%,#ededed 22%,#e0e0e0 28%,#8a8a8a 36%,#3a3a3a 44%,#6a6a6a 55%,#4a4a4a 64%,#e0e0e0 74%,#d0d0d0 80%,#6a6a6a 88%,#333 100%)" width="33.4" height="33.4" viewBox="0 0 34 34" preserveAspectRatio="none"><g style="filter:blur(0.7px)"><rect x="0" y="31" width="34" height="3" fill="#222" opacity="0.6"/></g></svg><div style="left:149.4px;top:73.17px;width:26.6px;height:16.8px;background:#fdfdfd;border:1px solid #e3e3e3;border-radius:8.4px"><div style="left:-1px;top:-1px;width:16.8px;height:16.8px;background:#fff;border-radius:50%;border:1px solid #dcdcdc;box-shadow:0 1px 2px rgba(0,0,0,.25)"></div></div><div style="left:192.1px;top:72.58px;width:26.6px;height:18px;border:1px solid #77cff0;border-radius:3px;background:#fff"><div class="c" style="left:12.3px;top:8.3px;color:#77cff0;font-size:10.5px">test</div></div><svg style="left:250.3px;top:76.08px" width="10.8" height="10.8" viewBox="0 0 12 12" fill="none" stroke="#2aa88a" stroke-width="1.1" stroke-linecap="round"><path d="M6.800 1.300H1.800a1.200 1.200 0 0 0-1.200 1.200v8a1.200 1.200 0 0 0 1.200 1.200h8a1.200 1.200 0 0 0 1.200-1.200V5.500"/><path d="M5 7.600L11.800 0.400"/></svg><svg style="left:268.9px;top:76.17px" width="9" height="10.8" viewBox="0 0 10 12" fill="none" stroke="#ff4582" stroke-width="1"><path d="M0 2.500h10M3.300 2.300V0.600h3.400v1.700M1 2.800l0.600 8.600h6.800l0.600-8.600"/><path d="M3.400 4.200v5.600M5 4.200v5.600M6.600 4.200v5.600" stroke-width="0.800"/></svg><div style="left:0px;top:103.5px;width:296.5px;height:42.45px;background:#fafafa;border-bottom:1px solid #ebedf7"></div><div style="left:9.6px;top:117.52px;width:14.2px;height:14.2px;background:#fff;border:1px solid #dcdfe6;border-radius:2px"></div><div class="c" style="left:51px;top:124.02px;font-size:12px;color:#555">12</div><svg style="left:76px;top:107.52px;background:linear-gradient(160deg,#141a3a 0%,#2a2f66 22%,#c23aa8 34%,#efe6f2 40%,#5ec39a 48%,#3f9f7c 65%,#2b6f5c 85%,#1b4a40 100%)" width="33.4" height="33.4" viewBox="0 0 34 34" preserveAspectRatio="none"><g style="filter:blur(0.7px)"><ellipse cx="26" cy="5" rx="7" ry="3" fill="#3a6a8a" opacity="0.7"/><path d="M9 15L16 12M12 11.500L13 15.500" stroke="#f4f4f4" stroke-width="1.2" fill="none"/><path d="M4 30L30 18" stroke="#7fd9b0" stroke-width="1" fill="none" opacity="0.5"/></g></svg><div style="left:149.4px;top:115.62px;width:26.6px;height:16.8px;background:#1677ff;border-radius:8.4px"><div style="left:10.8px;top:1px;width:14.8px;height:14.8px;background:#fff;border-radius:50%;box-shadow:0 1px 2px rgba(0,0,0,.3)"></div></div><div style="left:186.15px;top:115.02px;width:38.5px;height:18px;border:1px solid #f1e06c;border-radius:3px;background:#fff"><div class="c" style="left:18.25px;top:8.3px;color:#f1e06c;font-size:10.5px">admin</div></div><svg style="left:250.3px;top:118.52px" width="10.8" height="10.8" viewBox="0 0 12 12" fill="none" stroke="#2aa88a" stroke-width="1.1" stroke-linecap="round"><path d="M6.800 1.300H1.800a1.200 1.200 0 0 0-1.200 1.200v8a1.200 1.200 0 0 0 1.200 1.200h8a1.200 1.200 0 0 0 1.200-1.200V5.500"/><path d="M5 7.600L11.800 0.400"/></svg><svg style="left:268.9px;top:118.62px" width="9" height="10.8" viewBox="0 0 10 12" fill="none" stroke="#ff4582" stroke-width="1"><path d="M0 2.500h10M3.300 2.300V0.600h3.400v1.700M1 2.800l0.600 8.600h6.800l0.600-8.600"/><path d="M3.400 4.200v5.600M5 4.200v5.600M6.600 4.200v5.600" stroke-width="0.800"/></svg><div style="left:0px;top:145.95px;width:296.5px;height:42.45px;background:#fff;border-bottom:1px solid #ebedf7"></div><div style="left:9.6px;top:159.98px;width:14.2px;height:14.2px;background:#1677ff;border:1px solid #1677ff;border-radius:2px"><svg style="left:2.500px;top:3.500px" width="9" height="7" viewBox="0 0 9 7" fill="none" stroke="#fff" stroke-width="1.400"><path d="M0.800 3.500l2.500 2.500 5-5.200"/></svg></div><div class="c" style="left:51px;top:166.48px;font-size:12px;color:#555">13</div><svg style="left:76px;top:149.98px;background:linear-gradient(#d9d2cc 0%,#cfc4ba 35%,#b08a68 55%,#8a5a38 80%,#6e4428 100%)" width="33.4" height="33.4" viewBox="0 0 34 34" preserveAspectRatio="none"><g style="filter:blur(0.7px)"><rect x="0" y="0" width="34" height="10" fill="#ece9e5"/><rect x="3" y="0" width="1" height="10" fill="#3a302a"/><rect x="12" y="0" width="1" height="10" fill="#3a302a"/><rect x="22" y="0" width="1" height="10" fill="#3a302a"/><rect x="30" y="0" width="1" height="10" fill="#3a302a"/><rect x="0" y="10" width="34" height="1" fill="#4a3a30"/><rect x="8" y="12" width="6" height="9" fill="#ebe5de"/><rect x="22" y="12" width="6" height="9" fill="#ebe5de"/><rect x="13" y="11" width="12" height="1.5" fill="#5a3a28"/><path d="M14 13L11 30M24 13L27 30M17 13L16 28M21 13L22 28" stroke="#4a3020" stroke-width="1" fill="none"/></g></svg><div style="left:149.4px;top:158.08px;width:26.6px;height:16.8px;background:#1677ff;border-radius:8.4px"><div style="left:10.8px;top:1px;width:14.8px;height:14.8px;background:#fff;border-radius:50%;box-shadow:0 1px 2px rgba(0,0,0,.3)"></div></div><div style="left:192.1px;top:157.48px;width:26.6px;height:18px;border:1px solid #c47ff0;border-radius:3px;background:#fff"><div class="c" style="left:12.3px;top:8.3px;color:#c47ff0;font-size:10.5px">test</div></div><svg style="left:250.3px;top:160.98px" width="10.8" height="10.8" viewBox="0 0 12 12" fill="none" stroke="#2aa88a" stroke-width="1.1" stroke-linecap="round"><path d="M6.800 1.300H1.800a1.200 1.200 0 0 0-1.200 1.200v8a1.200 1.200 0 0 0 1.200 1.200h8a1.200 1.200 0 0 0 1.200-1.200V5.500"/><path d="M5 7.600L11.800 0.400"/></svg><svg style="left:268.9px;top:161.08px" width="9" height="10.8" viewBox="0 0 10 12" fill="none" stroke="#ff4582" stroke-width="1"><path d="M0 2.500h10M3.300 2.300V0.600h3.400v1.700M1 2.800l0.600 8.600h6.800l0.600-8.600"/><path d="M3.400 4.200v5.600M5 4.200v5.600M6.600 4.200v5.600" stroke-width="0.800"/></svg><div style="left:0px;top:188.4px;width:296.5px;height:42.45px;background:#fafafa;border-bottom:1px solid #ebedf7"></div><div style="left:9.6px;top:202.43px;width:14.2px;height:14.2px;background:#fff;border:1px solid #dcdfe6;border-radius:2px"></div><div class="c" style="left:51px;top:208.93px;font-size:12px;color:#555">14</div><svg style="left:76px;top:192.43px;background:linear-gradient(#f7f2f4 0%,#f3e4e9 35%,#e2c3cd 65%,#c79fac 100%)" width="33.4" height="33.4" viewBox="0 0 34 34" preserveAspectRatio="none"><g style="filter:blur(0.7px)"><ellipse cx="2.5" cy="21.0" rx="0.5" ry="0.5" fill="#8a5a68"/><ellipse cx="1.3" cy="18.1" rx="0.6" ry="0.6" fill="#a57684"/><ellipse cx="21.4" cy="22.3" rx="0.9" ry="0.9" fill="#6e4452"/><ellipse cx="9.8" cy="10.0" rx="0.7" ry="0.7" fill="#8a5a68"/><ellipse cx="3.5" cy="22.0" rx="0.6" ry="0.6" fill="#6e4452"/><ellipse cx="19.2" cy="23.3" rx="0.8" ry="0.8" fill="#5a3844"/><ellipse cx="15.8" cy="31.9" rx="0.6" ry="0.6" fill="#8a5a68"/><ellipse cx="17.9" cy="30.5" rx="0.7" ry="0.7" fill="#6e4452"/><ellipse cx="5.2" cy="19.7" rx="0.9" ry="0.9" fill="#5a3844"/><ellipse cx="11.6" cy="15.8" rx="1.0" ry="1.0" fill="#6e4452"/><ellipse cx="28.6" cy="32.5" rx="0.9" ry="0.9" fill="#6e4452"/><ellipse cx="12.1" cy="23.1" rx="0.6" ry="0.6" fill="#5a3844"/><ellipse cx="4.4" cy="12.9" rx="1.0" ry="1.0" fill="#6e4452"/><ellipse cx="5.7" cy="17.2" rx="0.6" ry="0.6" fill="#a57684"/><ellipse cx="29.4" cy="13.8" rx="0.7" ry="0.7" fill="#a57684"/><ellipse cx="32.6" cy="10.2" rx="0.6" ry="0.6" fill="#8a5a68"/><ellipse cx="0.4" cy="29.3" rx="0.7" ry="0.7" fill="#8a5a68"/><ellipse cx="32.4" cy="25.3" rx="0.9" ry="0.9" fill="#6e4452"/><ellipse cx="15.5" cy="30.4" rx="0.9" ry="0.9" fill="#a57684"/><ellipse cx="13.5" cy="17.0" rx="0.7" ry="0.7" fill="#8a5a68"/><ellipse cx="2.3" cy="11.8" rx="0.7" ry="0.7" fill="#6e4452"/><ellipse cx="3.5" cy="21.9" rx="1.1" ry="1.1" fill="#6e4452"/><ellipse cx="2.4" cy="11.8" rx="0.9" ry="0.9" fill="#5a3844"/><ellipse cx="20.5" cy="19.3" rx="0.8" ry="0.8" fill="#a57684"/><ellipse cx="16.3" cy="14.7" rx="0.9" ry="0.9" fill="#5a3844"/><ellipse cx="16.3" cy="25.4" rx="0.6" ry="0.6" fill="#5a3844"/><ellipse cx="5.0" cy="21.2" rx="0.8" ry="0.8" fill="#6e4452"/><ellipse cx="23.7" cy="13.3" rx="0.6" ry="0.6" fill="#8a5a68"/><ellipse cx="18.1" cy="27.8" rx="0.6" ry="0.6" fill="#8a5a68"/><ellipse cx="27.4" cy="28.9" rx="0.6" ry="0.6" fill="#a57684"/><ellipse cx="12.1" cy="6.8" rx="0.7" ry="0.7" fill="#5a3844"/><ellipse cx="6.6" cy="22.9" rx="1.0" ry="1.0" fill="#5a3844"/><ellipse cx="32.5" cy="16.2" rx="0.6" ry="0.6" fill="#8a5a68"/><ellipse cx="6.8" cy="30.9" rx="0.9" ry="0.9" fill="#6e4452"/><ellipse cx="27.2" cy="33.2" rx="0.7" ry="0.7" fill="#6e4452"/><ellipse cx="24.6" cy="10.8" rx="0.6" ry="0.6" fill="#a57684"/><ellipse cx="33.3" cy="24.4" rx="0.8" ry="0.8" fill="#8a5a68"/><ellipse cx="0.7" cy="28.4" rx="0.6" ry="0.6" fill="#8a5a68"/><ellipse cx="14.7" cy="30.4" rx="0.6" ry="0.6" fill="#5a3844"/><ellipse cx="22.5" cy="28.8" rx="1.0" ry="1.0" fill="#8a5a68"/><ellipse cx="18.1" cy="20.7" rx="0.8" ry="0.8" fill="#8a5a68"/><ellipse cx="20.7" cy="27.7" rx="0.6" ry="0.6" fill="#6e4452"/><ellipse cx="18.9" cy="28.0" rx="0.8" ry="0.8" fill="#8a5a68"/><ellipse cx="6.5" cy="7.2" rx="0.8" ry="0.8" fill="#6e4452"/><ellipse cx="25.8" cy="31.5" rx="0.9" ry="0.9" fill="#8a5a68"/><ellipse cx="23.6" cy="18.7" rx="0.8" ry="0.8" fill="#8a5a68"/><ellipse cx="23.8" cy="30.5" rx="0.7" ry="0.7" fill="#8a5a68"/><ellipse cx="28.6" cy="9.8" rx="0.8" ry="0.8" fill="#6e4452"/><ellipse cx="22.8" cy="18.0" rx="0.7" ry="0.7" fill="#6e4452"/><ellipse cx="3" cy="22" rx="7" ry="6" fill="#fff" opacity="0.55"/></g></svg><div style="left:149.4px;top:200.53px;width:26.6px;height:16.8px;background:#fdfdfd;border:1px solid #e3e3e3;border-radius:8.4px"><div style="left:-1px;top:-1px;width:16.8px;height:16.8px;background:#fff;border-radius:50%;border:1px solid #dcdcdc;box-shadow:0 1px 2px rgba(0,0,0,.25)"></div></div><div style="left:192.1px;top:199.93px;width:26.6px;height:18px;border:1px solid #86e8a0;border-radius:3px;background:#fff"><div class="c" style="left:12.3px;top:8.3px;color:#86e8a0;font-size:10.5px">test</div></div><svg style="left:250.3px;top:203.43px" width="10.8" height="10.8" viewBox="0 0 12 12" fill="none" stroke="#2aa88a" stroke-width="1.1" stroke-linecap="round"><path d="M6.800 1.300H1.800a1.200 1.200 0 0 0-1.200 1.200v8a1.200 1.200 0 0 0 1.200 1.200h8a1.200 1.200 0 0 0 1.200-1.200V5.500"/><path d="M5 7.600L11.800 0.400"/></svg><svg style="left:268.9px;top:203.53px" width="9" height="10.8" viewBox="0 0 10 12" fill="none" stroke="#ff4582" stroke-width="1"><path d="M0 2.500h10M3.300 2.300V0.600h3.400v1.700M1 2.800l0.600 8.600h6.800l0.600-8.600"/><path d="M3.400 4.200v5.600M5 4.200v5.600M6.600 4.200v5.600" stroke-width="0.800"/></svg><div style="left:0px;top:230.85px;width:296.5px;height:42.45px;background:#fff;border-bottom:1px solid #ebedf7"></div><div style="left:9.6px;top:244.88px;width:14.2px;height:14.2px;background:#1677ff;border:1px solid #1677ff;border-radius:2px"><svg style="left:2.500px;top:3.500px" width="9" height="7" viewBox="0 0 9 7" fill="none" stroke="#fff" stroke-width="1.400"><path d="M0.800 3.500l2.500 2.500 5-5.200"/></svg></div><div class="c" style="left:51px;top:251.38px;font-size:12px;color:#555">15</div><svg style="left:76px;top:234.88px;background:linear-gradient(#44909a 0%,#3f8a90 50%,#2f787f 100%)" width="33.4" height="33.4" viewBox="0 0 34 34" preserveAspectRatio="none"><g style="filter:blur(0.7px)"><rect x="1" y="21.5" width="8" height="2.5" fill="#b23a2e"/><rect x="2" y="20.3" width="5" height="1.2" fill="#e8e0d8"/><rect x="0" y="33" width="34" height="1" fill="#1f5a60"/></g></svg><div style="left:149.4px;top:242.98px;width:26.6px;height:16.8px;background:#1677ff;border-radius:8.4px"><div style="left:10.8px;top:1px;width:14.8px;height:14.8px;background:#fff;border-radius:50%;box-shadow:0 1px 2px rgba(0,0,0,.3)"></div></div><div style="left:192.7px;top:242.38px;width:25.4px;height:18px;border:1px solid #f07f70;border-radius:3px;background:#fff"><div class="c" style="left:11.7px;top:8.3px;color:#f07f70;font-size:10.5px">dev</div></div><svg style="left:250.3px;top:245.88px" width="10.8" height="10.8" viewBox="0 0 12 12" fill="none" stroke="#2aa88a" stroke-width="1.1" stroke-linecap="round"><path d="M6.800 1.300H1.800a1.200 1.200 0 0 0-1.200 1.200v8a1.200 1.200 0 0 0 1.200 1.200h8a1.200 1.200 0 0 0 1.200-1.200V5.500"/><path d="M5 7.600L11.800 0.400"/></svg><svg style="left:268.9px;top:245.98px" width="9" height="10.8" viewBox="0 0 10 12" fill="none" stroke="#ff4582" stroke-width="1"><path d="M0 2.500h10M3.300 2.300V0.600h3.400v1.700M1 2.800l0.600 8.600h6.800l0.600-8.600"/><path d="M3.400 4.200v5.600M5 4.200v5.600M6.600 4.200v5.600" stroke-width="0.800"/></svg><div style="left:0px;top:273.3px;width:296.5px;height:42.45px;background:#fafafa;border-bottom:1px solid #ebedf7"></div><div style="left:9.6px;top:287.33px;width:14.2px;height:14.2px;background:#1677ff;border:1px solid #1677ff;border-radius:2px"><svg style="left:2.500px;top:3.500px" width="9" height="7" viewBox="0 0 9 7" fill="none" stroke="#fff" stroke-width="1.400"><path d="M0.800 3.500l2.500 2.500 5-5.200"/></svg></div><div class="c" style="left:51px;top:293.83px;font-size:12px;color:#555">16</div><svg style="left:76px;top:277.33px;background:linear-gradient(#dbe9f7 0%,#cfe0f3 38%,#3f7fd0 46%,#2a66bd 70%,#1f58ac 100%)" width="33.4" height="33.4" viewBox="0 0 34 34" preserveAspectRatio="none"><g style="filter:blur(0.7px)"><polygon points="16,15 22,12.500 30,14 34,14.500 34,17 16,17" fill="#8fa3b0"/><ellipse cx="31.5" cy="25" rx="2.5" ry="1.5" fill="#16243a"/><path d="M0 22H20M6 26H30M0 30H18" stroke="#6fa6e6" stroke-width="0.8" fill="none" opacity="0.7"/></g></svg><div style="left:149.4px;top:285.43px;width:26.6px;height:16.8px;background:#fdfdfd;border:1px solid #e3e3e3;border-radius:8.4px"><div style="left:-1px;top:-1px;width:16.8px;height:16.8px;background:#fff;border-radius:50%;border:1px solid #dcdcdc;box-shadow:0 1px 2px rgba(0,0,0,.25)"></div></div><div style="left:192.1px;top:284.83px;width:26.6px;height:18px;border:1px solid #6f8ff0;border-radius:3px;background:#fff"><div class="c" style="left:12.3px;top:8.3px;color:#6f8ff0;font-size:10.5px">test</div></div><svg style="left:250.3px;top:288.33px" width="10.8" height="10.8" viewBox="0 0 12 12" fill="none" stroke="#2aa88a" stroke-width="1.1" stroke-linecap="round"><path d="M6.800 1.300H1.800a1.200 1.200 0 0 0-1.200 1.200v8a1.200 1.200 0 0 0 1.200 1.200h8a1.200 1.200 0 0 0 1.200-1.200V5.500"/><path d="M5 7.600L11.800 0.400"/></svg><svg style="left:268.9px;top:288.43px" width="9" height="10.8" viewBox="0 0 10 12" fill="none" stroke="#ff4582" stroke-width="1"><path d="M0 2.500h10M3.300 2.300V0.600h3.400v1.700M1 2.800l0.600 8.600h6.800l0.600-8.600"/><path d="M3.400 4.200v5.600M5 4.200v5.600M6.600 4.200v5.600" stroke-width="0.800"/></svg><div style="left:0px;top:315.75px;width:296.5px;height:42.45px;background:#fff;border-bottom:1px solid #ebedf7"></div><div style="left:9.6px;top:329.78px;width:14.2px;height:14.2px;background:#1677ff;border:1px solid #1677ff;border-radius:2px"><svg style="left:2.500px;top:3.500px" width="9" height="7" viewBox="0 0 9 7" fill="none" stroke="#fff" stroke-width="1.400"><path d="M0.800 3.500l2.500 2.500 5-5.200"/></svg></div><div class="c" style="left:51px;top:336.28px;font-size:12px;color:#555">17</div><svg style="left:76px;top:319.78px;background:linear-gradient(#244f8f 0%,#2f62a6 40%,#3a74b6 60%,#1f5a94 66%,#2a7fb0 100%)" width="33.4" height="33.4" viewBox="0 0 34 34" preserveAspectRatio="none"><g style="filter:blur(0.7px)"><ellipse cx="20" cy="7" rx="10" ry="3" fill="#e6edf6"/><ellipse cx="29" cy="11.5" rx="5" ry="2" fill="#dfe8f2"/><ellipse cx="12" cy="4" rx="5" ry="1.5" fill="#c9d8ea" opacity="0.8"/><polygon points="25,21 26.500,26 23.500,26" fill="#fff"/></g></svg><div style="left:149.4px;top:327.88px;width:26.6px;height:16.8px;background:#1677ff;border-radius:8.4px"><div style="left:10.8px;top:1px;width:14.8px;height:14.8px;background:#fff;border-radius:50%;box-shadow:0 1px 2px rgba(0,0,0,.3)"></div></div><div style="left:192.1px;top:327.28px;width:26.6px;height:18px;border:1px solid #b0ef80;border-radius:3px;background:#fff"><div class="c" style="left:12.3px;top:8.3px;color:#b0ef80;font-size:10.5px">test</div></div><svg style="left:250.3px;top:330.78px" width="10.8" height="10.8" viewBox="0 0 12 12" fill="none" stroke="#2aa88a" stroke-width="1.1" stroke-linecap="round"><path d="M6.800 1.300H1.800a1.200 1.200 0 0 0-1.200 1.200v8a1.200 1.200 0 0 0 1.200 1.200h8a1.200 1.200 0 0 0 1.200-1.200V5.500"/><path d="M5 7.600L11.800 0.400"/></svg><svg style="left:268.9px;top:330.88px" width="9" height="10.8" viewBox="0 0 10 12" fill="none" stroke="#ff4582" stroke-width="1"><path d="M0 2.500h10M3.300 2.300V0.600h3.400v1.700M1 2.800l0.600 8.600h6.800l0.600-8.600"/><path d="M3.400 4.200v5.600M5 4.200v5.600M6.600 4.200v5.600" stroke-width="0.800"/></svg><div style="left:0px;top:358.2px;width:296.5px;height:42.45px;background:#fafafa;border-bottom:1px solid #ebedf7"></div><div style="left:9.6px;top:372.23px;width:14.2px;height:14.2px;background:#1677ff;border:1px solid #1677ff;border-radius:2px"><svg style="left:2.500px;top:3.500px" width="9" height="7" viewBox="0 0 9 7" fill="none" stroke="#fff" stroke-width="1.400"><path d="M0.800 3.500l2.500 2.500 5-5.200"/></svg></div><div class="c" style="left:51px;top:378.73px;font-size:12px;color:#555">18</div><svg style="left:76px;top:362.23px;background:linear-gradient(#e9f1f8 0%,#f3eef0 45%,#7a4a50 56%,#6a3f46 75%,#553238 100%)" width="33.4" height="33.4" viewBox="0 0 34 34" preserveAspectRatio="none"><g style="filter:blur(0.7px)"><rect x="16" y="21.5" width="3.2" height="8" fill="#f2eeee"/><ellipse cx="17.6" cy="20.3" rx="1.3" ry="1.3" fill="#3a2a2a"/><rect x="0" y="18" width="34" height="1.5" fill="#5a3a40" opacity="0.8"/><rect x="15" y="17" width="2" height="2" fill="#2a2024"/></g></svg><div style="left:149.4px;top:370.33px;width:26.6px;height:16.8px;background:#fdfdfd;border:1px solid #e3e3e3;border-radius:8.4px"><div style="left:-1px;top:-1px;width:16.8px;height:16.8px;background:#fff;border-radius:50%;border:1px solid #dcdcdc;box-shadow:0 1px 2px rgba(0,0,0,.25)"></div></div><div style="left:186.15px;top:369.73px;width:38.5px;height:18px;border:1px solid #f06fe0;border-radius:3px;background:#fff"><div class="c" style="left:18.25px;top:8.3px;color:#f06fe0;font-size:10.5px">admin</div></div><svg style="left:250.3px;top:373.23px" width="10.8" height="10.8" viewBox="0 0 12 12" fill="none" stroke="#2aa88a" stroke-width="1.1" stroke-linecap="round"><path d="M6.800 1.300H1.800a1.200 1.200 0 0 0-1.200 1.200v8a1.200 1.200 0 0 0 1.200 1.200h8a1.200 1.200 0 0 0 1.200-1.200V5.500"/><path d="M5 7.600L11.800 0.400"/></svg><svg style="left:268.9px;top:373.33px" width="9" height="10.8" viewBox="0 0 10 12" fill="none" stroke="#ff4582" stroke-width="1"><path d="M0 2.500h10M3.300 2.300V0.600h3.400v1.700M1 2.800l0.600 8.600h6.800l0.600-8.600"/><path d="M3.400 4.200v5.600M5 4.200v5.600M6.600 4.200v5.600" stroke-width="0.800"/></svg><div style="left:0px;top:400.65px;width:296.5px;height:42.45px;background:#fff;border-bottom:1px solid #ebedf7"></div><div style="left:9.6px;top:414.68px;width:14.2px;height:14.2px;background:#1677ff;border:1px solid #1677ff;border-radius:2px"><svg style="left:2.500px;top:3.500px" width="9" height="7" viewBox="0 0 9 7" fill="none" stroke="#fff" stroke-width="1.400"><path d="M0.800 3.500l2.500 2.500 5-5.200"/></svg></div><div class="c" style="left:51px;top:421.18px;font-size:12px;color:#555">19</div><svg style="left:76px;top:404.68px;background:#f4e4a4" width="33.4" height="33.4" viewBox="0 0 34 34" preserveAspectRatio="none"><g style="filter:blur(0.7px)"><ellipse cx="10" cy="15" rx="9" ry="9" fill="#5a3f28"/><ellipse cx="10" cy="22" rx="8" ry="6" fill="#d8b08a"/></g></svg><div style="left:149.4px;top:412.78px;width:26.6px;height:16.8px;background:#fdfdfd;border:1px solid #e3e3e3;border-radius:8.4px"><div style="left:-1px;top:-1px;width:16.8px;height:16.8px;background:#fff;border-radius:50%;border:1px solid #dcdcdc;box-shadow:0 1px 2px rgba(0,0,0,.25)"></div></div><div style="left:192.1px;top:412.18px;width:26.6px;height:18px;border:1px solid #70e8e0;border-radius:3px;background:#fff"><div class="c" style="left:12.3px;top:8.3px;color:#70e8e0;font-size:10.5px">test</div></div><svg style="left:250.3px;top:415.68px" width="10.8" height="10.8" viewBox="0 0 12 12" fill="none" stroke="#2aa88a" stroke-width="1.1" stroke-linecap="round"><path d="M6.800 1.300H1.800a1.200 1.200 0 0 0-1.200 1.200v8a1.200 1.200 0 0 0 1.200 1.200h8a1.200 1.200 0 0 0 1.200-1.200V5.500"/><path d="M5 7.600L11.800 0.400"/></svg><svg style="left:268.9px;top:415.78px" width="9" height="10.8" viewBox="0 0 10 12" fill="none" stroke="#ff4582" stroke-width="1"><path d="M0 2.500h10M3.300 2.300V0.600h3.400v1.700M1 2.800l0.600 8.600h6.800l0.600-8.600"/><path d="M3.400 4.200v5.600M5 4.200v5.600M6.600 4.200v5.600" stroke-width="0.800"/></svg><div style="left:0px;top:0px;width:296.5px;height:28.6px;background:#efefef"></div><div style="left:9.6px;top:7px;width:14.2px;height:14.2px;background:#fff;border:1px solid #dcdfe6;border-radius:2px"></div><div class="c" style="left:51px;top:15.3px;font-weight:bold;font-size:11.500px;color:#333">ID</div><div class="t" style="left:81.8px;top:15.3px;font-weight:bold;font-size:11.500px;color:#333">图片</div><div class="c" style="left:163.5px;top:15.3px;font-weight:bold;font-size:11.500px;color:#333">推荐</div><div class="c" style="left:205.4px;top:15.3px;font-weight:bold;font-size:11.500px;color:#333">标签</div><div class="c" style="left:264.5px;top:15.3px;font-weight:bold;font-size:11.500px;color:#333">操作</div><div style="left:68.3px;top:0px;width:4px;height:420px;background:linear-gradient(90deg,rgba(0,0,0,.09),rgba(0,0,0,0))"></div><div style="left:228px;top:0px;width:4px;height:420px;background:linear-gradient(270deg,rgba(0,0,0,.09),rgba(0,0,0,0))"></div><div style="left:0px;top:0px;width:1px;height:420px;background:#ebedf7"></div><div style="left:295.5px;top:0px;width:1px;height:420px;background:#ebedf7"></div><div style="left:0px;top:414.2px;width:296.5px;height:1px;background:#ebedf7"></div></div></div></body></html>
